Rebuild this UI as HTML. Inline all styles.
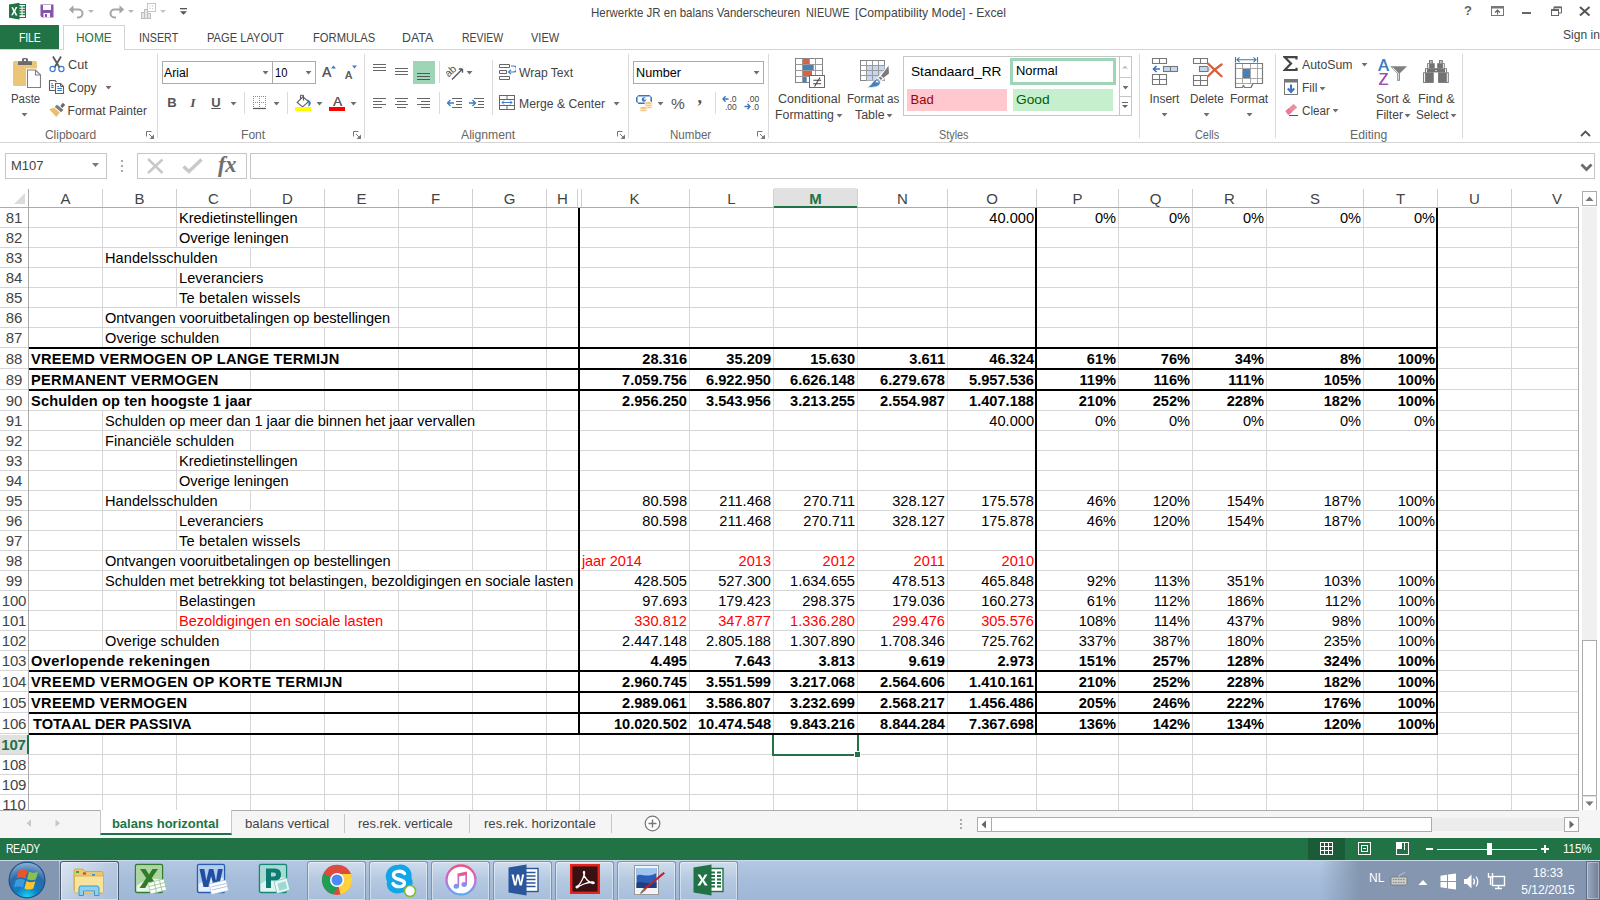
<!DOCTYPE html>
<html><head><meta charset="utf-8"><title>Excel</title>
<style>
*{box-sizing:border-box;margin:0;padding:0}
html,body{width:1600px;height:900px;overflow:hidden;background:#fff}
body{font-family:"Liberation Sans",sans-serif;font-size:12px;color:#444;position:relative}
#app{position:absolute;left:0;top:0;width:1600px;height:900px;overflow:hidden;background:#fff}
#app div,#app i,#app span.a,#app svg{position:absolute}
i{display:block}
/* grid */
.hl{height:1px;background:#d6d6d6}
.vl{width:1px;background:#d6d6d6}
.tk{background:#000;z-index:3}
.ch{top:188px;height:19px;line-height:21.5px;text-align:center;font-size:15px;color:#444}
.ch.sel{background:#e1e1e1;color:#217346;font-weight:bold;border-bottom:2px solid #217346;height:20px}
.hs{top:189px;width:1px;height:18px;background:#d0d0d0}
.rh{left:0;width:28px;text-align:center;font-size:15px;color:#444;letter-spacing:-0.15px}
.rh.sel{background:#e1e1e1;color:#217346;font-weight:bold;border-right:2px solid #217346;width:29px}
.rs{left:0;width:28px;height:1px;background:#d6d6d6}
.ct{font-size:14.6px;color:#000;white-space:nowrap;overflow:visible;z-index:1}
.ct span{display:inline-block;background:#fff;height:100%;vertical-align:top;position:relative}
.ct span b{font-weight:inherit;position:relative;top:1px}
.ct.l{padding-left:0}
.ct.l span{padding-left:2px;padding-right:1px}
.ct.r{text-align:right}
.ct.r span{padding-right:2px}
.ct.b{font-weight:bold}
.ct.red{color:#ff0000}
</style></head><body>
<div id="app">
<!-- ============ TITLE BAR ============ -->
<style>.tt{font-size:12.2px;color:#444;white-space:nowrap;line-height:18px;height:18px}</style>
<div id="tb" style="left:0;top:0;width:1600px;height:25px;background:#fff">
<!-- excel logo -->
<svg style="left:8px;top:2px" width="19" height="19" viewBox="0 0 19 19">
 <rect x="9" y="2.5" width="8.5" height="13" fill="#fff" stroke="#217346" stroke-width="1"></rect>
 <path d="M11 5h2.5M14.5 5H17M11 7.5h2.5M14.5 7.5H17M11 10h2.5M14.5 10H17M11 12.5h2.5M14.5 12.5H17" stroke="#217346" stroke-width="1.4"></path>
 <path d="M1 2.6 11.5 0.8V17.6L1 15.8Z" fill="#217346"></path>
 <path d="M3.3 5.3 5.1 5.2 6.3 7.9 7.6 5 9.4 4.9 7.3 9.2 9.5 13.6 7.6 13.5 6.2 10.6 4.9 13.3 3.2 13.2 5.3 9.2Z" fill="#fff"></path>
</svg>
<!-- save -->
<svg style="left:40px;top:4px" width="14" height="14" viewBox="0 0 14 14">
 <path d="M0.5 0.5H13.5V13.5H2L0.5 12Z" fill="#8653ae"></path>
 <rect x="3" y="1" width="8" height="5" fill="#fff"></rect>
 <rect x="3.5" y="9" width="6.5" height="4.5" fill="#fff"></rect>
 <rect x="5" y="10" width="2" height="3" fill="#8653ae"></rect>
</svg>
<!-- undo -->
<svg style="left:68px;top:4px" width="17" height="15" viewBox="0 0 17 15">
 <path d="M3 5.5H10.5A4 4 0 0 1 10.5 13.5H9" fill="none" stroke="#a6a6a6" stroke-width="2"></path>
 <path d="M0.8 5.5 5.5 1.3V9.7Z" fill="#a6a6a6"></path>
</svg>
<svg style="left:88px;top:10px" width="7" height="4"><path d="M0 0H6L3 3Z" fill="#b5b5b5"></path></svg>
<!-- redo -->
<svg style="left:108px;top:4px" width="17" height="15" viewBox="0 0 17 15">
 <path d="M14 5.5H6.5A4 4 0 0 0 6.5 13.5H8" fill="none" stroke="#a6a6a6" stroke-width="2"></path>
 <path d="M16.2 5.5 11.5 1.3V9.7Z" fill="#a6a6a6"></path>
</svg>
<svg style="left:128px;top:10px" width="7" height="4"><path d="M0 0H6L3 3Z" fill="#b5b5b5"></path></svg>
<!-- disabled chart icon -->
<svg style="left:141px;top:3px" width="16" height="17" viewBox="0 0 16 17">
 <rect x="6.5" y="0.5" width="8" height="8" fill="#fff" stroke="#c4c4c4"></rect>
 <path d="M8.5 3h1M11 3h1M8.5 5.5h1M11 5.5h1" stroke="#c4c4c4" stroke-width="1.2"></path>
 <rect x="0.5" y="9.5" width="3" height="6" fill="#e6e6e6" stroke="#bdbdbd"></rect>
 <rect x="3.5" y="6.5" width="3" height="9" fill="#e6e6e6" stroke="#bdbdbd"></rect>
 <rect x="6.5" y="10.5" width="3" height="5" fill="#e6e6e6" stroke="#bdbdbd"></rect>
</svg>
<svg style="left:160px;top:10px" width="7" height="4"><path d="M0 0H6L3 3Z" fill="#c4c4c4"></path></svg>
<!-- customize QAT -->
<svg style="left:180px;top:8px" width="8" height="8"><rect x="0" y="0" width="7" height="1.3" fill="#555"></rect><path d="M0 3.2H7L3.5 6.8Z" fill="#555"></path></svg>
<div class="tt" style="left: 590.9px; top: 4px; width: auto; text-align: left; padding-left: 0px; padding-right: 0px; transform: scaleX(0.9424); transform-origin: 0px 0px;">Herwerkte JR en balans Vanderscheuren</div>
<div class="tt" style="left: 805.7px; top: 4px; width: auto; text-align: left; padding-left: 0px; padding-right: 0px; transform: scaleX(0.8944); transform-origin: 0px 0px;">NIEUWE</div>
<div class="tt" style="left: 855px; top: 4px; width: auto; text-align: left; padding-left: 0px; padding-right: 0px;">[Compatibility Mode] - Excel</div>
<!-- window controls -->
<div style="left:1462px;top:3px;width:12px;height:16px;line-height:16px;font-size:13px;font-weight:bold;color:#666;text-align:center">?</div>
<svg style="left:1491px;top:6px" width="14" height="11" viewBox="0 0 14 11"><rect x="0.5" y="0.5" width="12" height="9" fill="none" stroke="#777"></rect><rect x="0.5" y="0.5" width="12" height="2" fill="#777"></rect><path d="M6.500 4v4.500M4 6.500l2.500-2.500 2.500 2.500" stroke="#666" fill="none" stroke-width="1.200"></path></svg>
<i style="left:1522px;top:12px;width:9px;height:2px;background:#666"></i>
<svg style="left:1551px;top:6px" width="12" height="12" viewBox="0 0 12 12"><rect x="0.5" y="3.5" width="7" height="6" fill="#fff" stroke="#666"></rect><rect x="0.5" y="3.5" width="7" height="1.5" fill="#666"></rect><path d="M3 3.5V1H10.5V7H8" fill="none" stroke="#666"></path><path d="M3 1.5H10.5" stroke="#666" stroke-width="1.6"></path></svg>
<svg style="left:1579px;top:6px" width="12" height="11" viewBox="0 0 12 11"><path d="M1 1 10.5 9.5M10.5 1 1 9.5" stroke="#555" stroke-width="2"></path></svg>
</div>

<!-- ============ RIBBON ============ -->
<style>
.t{font-size:12px;color:#444;white-space:nowrap;line-height:16px;height:16px}
.tc{text-align:center}
.dd{width:6px;height:3.5px;margin-left:.5px;background:#6f6f6f;clip-path:polygon(0 0,100% 0,50% 100%)}
.gs{top:54px;width:1px;height:84px;background:#dadada}
.ss{width:1px;height:22px;background:#dadada}
.gl{top:127px;font-size:12px;color:#666;line-height:16px;height:16px;white-space:nowrap;text-align:center}
.tab{top:25px;height:24px;line-height:26px;font-size:12.2px;color:#444;text-align:center;white-space:nowrap}
.box{border:1px solid #ababab;background:#fff}
</style>
<!-- tab row -->
<i style="left:0;top:49px;width:1600px;height:1px;background:#d4d4d4"></i>
<i style="left:0;top:25px;width:59px;height:24px;background:#217346"></i>
<div class="tab" style="left: 18.9px; width: auto; color: rgb(255, 255, 255); letter-spacing: -0.172px; text-align: left; padding-left: 0px; padding-right: 0px; transform: scaleX(0.86); transform-origin: 0px 0px;">FILE</div>
<i style="left:63px;top:25px;width:62px;height:25px;border:1px solid #d4d4d4;border-bottom:none;background:#fff"></i>
<div class="tab" style="left: 75.6px; width: auto; color: rgb(33, 115, 70); text-align: left; padding-left: 0px; padding-right: 0px; transform: scaleX(0.9791); transform-origin: 0px 0px;">HOME</div>
<div class="tab" style="left: 138.9px; width: auto; text-align: left; padding-left: 0px; padding-right: 0px; transform: scaleX(0.8812); transform-origin: 0px 0px;">INSERT</div>
<div class="tab" style="left: 206.9px; width: auto; text-align: left; padding-left: 0px; padding-right: 0px; transform: scaleX(0.9131); transform-origin: 0px 0px;">PAGE LAYOUT</div>
<div class="tab" style="left: 312.6px; width: auto; text-align: left; padding-left: 0px; padding-right: 0px; transform: scaleX(0.9185); transform-origin: 0px 0px;">FORMULAS</div>
<div class="tab" style="left: 402.4px; width: auto; text-align: left; padding-left: 0px; padding-right: 0px; transform: scaleX(1.0162); transform-origin: 0px 0px;">DATA</div>
<div class="tab" style="left: 462.4px; width: auto; letter-spacing: -0.034px; text-align: left; padding-left: 0px; padding-right: 0px; transform: scaleX(0.86); transform-origin: 0px 0px;">REVIEW</div>
<div class="tab" style="left: 531.4px; width: auto; text-align: left; padding-left: 0px; padding-right: 0px; transform: scaleX(0.9051); transform-origin: 0px 0px;">VIEW</div>
<div class="t" style="left: 1563.2px; top: 27px; width: auto; text-align: left; padding-right: 0px; padding-left: 0px; transform: scaleX(1.0054); transform-origin: 0px 0px;">Sign in</div>
<!-- ribbon bottom line -->
<i style="left:0;top:142px;width:1600px;height:1px;background:#d4d4d4"></i>
<!-- group separators -->
<i class="gs" style="left:157px"></i><i class="gs" style="left:364px"></i><i class="gs" style="left:628px"></i><i class="gs" style="left:768px"></i><i class="gs" style="left:1139px"></i><i class="gs" style="left:1275px"></i><i class="gs" style="left:1462px"></i>
<!-- group labels -->
<div class="gl" style="left: 44.9px; width: auto; text-align: left; padding-left: 0px; padding-right: 0px;">Clipboard</div>
<div class="gl" style="left: 240.9px; width: auto; text-align: left; padding-left: 0px; padding-right: 0px; transform: scaleX(1.0077); transform-origin: 0px 0px;">Font</div>
<div class="gl" style="left: 461.4px; width: auto; text-align: left; padding-left: 0px; padding-right: 0px; transform: scaleX(1.0155); transform-origin: 0px 0px;">Alignment</div>
<div class="gl" style="left: 670.1px; width: auto; text-align: left; padding-left: 0px; padding-right: 0px; transform: scaleX(0.9652); transform-origin: 0px 0px;">Number</div>
<div class="gl" style="left: 938.6px; width: auto; text-align: left; padding-left: 0px; padding-right: 0px; transform: scaleX(0.9025); transform-origin: 0px 0px;">Styles</div>
<div class="gl" style="left: 1195.1px; width: auto; text-align: left; padding-left: 0px; padding-right: 0px; transform: scaleX(0.9073); transform-origin: 0px 0px;">Cells</div>
<div class="gl" style="left: 1349.9px; width: auto; text-align: left; padding-left: 0px; padding-right: 0px; transform: scaleX(1.019); transform-origin: 0px 0px;">Editing</div>
<!-- dialog launchers -->
<svg class="dl" style="left:146px;top:131px" width="8" height="8"><path d="M0.500 5.500V0.500H5.500" fill="none" stroke="#777"></path><path d="M3 3 6.500 6.500" stroke="#777"></path><path d="M8 3.500V8H3.500Z" fill="#777"></path></svg>
<svg class="dl" style="left:353px;top:131px" width="8" height="8"><path d="M0.500 5.500V0.500H5.500" fill="none" stroke="#777"></path><path d="M3 3 6.500 6.500" stroke="#777"></path><path d="M8 3.500V8H3.500Z" fill="#777"></path></svg>
<svg class="dl" style="left:617px;top:131px" width="8" height="8"><path d="M0.500 5.500V0.500H5.500" fill="none" stroke="#777"></path><path d="M3 3 6.500 6.500" stroke="#777"></path><path d="M8 3.500V8H3.500Z" fill="#777"></path></svg>
<svg class="dl" style="left:757px;top:131px" width="8" height="8"><path d="M0.500 5.500V0.500H5.500" fill="none" stroke="#777"></path><path d="M3 3 6.500 6.500" stroke="#777"></path><path d="M8 3.500V8H3.500Z" fill="#777"></path></svg>
<!-- collapse chevron -->
<svg style="left:1580px;top:130px" width="11" height="7"><path d="M1 6 5.5 1.5 10 6" fill="none" stroke="#555" stroke-width="1.8"></path></svg>

<!-- ===== Clipboard ===== -->
<svg style="left:11px;top:56px" width="32" height="34" viewBox="0 0 32 34">
 <rect x="2" y="5" width="24" height="25" rx="1.500" fill="#ebc678"></rect>
 <path d="M7 9V6.300Q7 5.300 8 5.300H11V3.600Q11 2 12.600 2H15.400Q17 2 17 3.600V5.300H20Q21 5.300 21 6.300V9Z" fill="#6b6b6b"></path>
 <rect x="13" y="3.300" width="2" height="1.700" fill="#fff"></rect>
 <rect x="15" y="12.500" width="15" height="20" fill="#fff"></rect>
 <path d="M16.500 14H24.500L29.500 19V31.500H16.500Z" fill="#fff" stroke="#7f7f7f" stroke-width="1.100"></path>
 <path d="M24.500 14V19H29.500" fill="none" stroke="#7f7f7f" stroke-width="1.100"></path>
</svg>
<div class="t tc" style="left: 10.6px; top: 91px; width: auto; text-align: left; padding-left: 0px; padding-right: 0px; transform: scaleX(0.9515); transform-origin: 0px 0px;">Paste</div>
<i class="dd" style="left:21px;top:113px"></i>
<!-- cut -->
<svg style="left:49px;top:56px" width="16" height="17" viewBox="0 0 16 17">
 <path d="M4 0.500 10.500 11.500M12 0.500 5.500 11.500" stroke="#595959" stroke-width="1.800" fill="none"></path>
 <circle cx="3.6" cy="13" r="2.6" fill="#fff" stroke="#3e7cc4" stroke-width="1.2"></circle>
 <circle cx="12.4" cy="13" r="2.6" fill="#fff" stroke="#3e7cc4" stroke-width="1.2"></circle>
</svg>
<div class="t" style="left: 67.6px; top: 57px; width: auto; text-align: left; padding-left: 0px; padding-right: 0px; transform: scaleX(1.0542); transform-origin: 0px 0px;">Cut</div>
<!-- copy -->
<svg style="left:48px;top:79px" width="17" height="17" viewBox="0 0 17 17">
 <path d="M8.500 3 7 1.500H1.500V11.500H7" fill="none" stroke="#5f5f5f" stroke-width="1.100"></path>
 <path d="M3.200 4.700H5M3.200 6.600H5.700M3.200 8.500H5.700" stroke="#3a76c0" stroke-width="1.100"></path>
 <path d="M7.500 4.500H12.500L15.500 7.500V14.500H7.500Z" fill="#fff" stroke="#5f5f5f" stroke-width="1.100"></path>
 <path d="M12.500 4.500V7.500H15.500" fill="none" stroke="#5f5f5f" stroke-width="1"></path>
 <path d="M9.300 7.500H11M9.300 9.500H13.900M9.300 11.500H13.900" stroke="#3a76c0" stroke-width="1.100"></path>
</svg>
<div class="t" style="left: 67.6px; top: 80px; width: auto; text-align: left; padding-left: 0px; padding-right: 0px; transform: scaleX(1.0244); transform-origin: 0px 0px;">Copy</div>
<i class="dd" style="left:105px;top:86px"></i>
<!-- format painter -->
<svg style="left:49px;top:102px" width="17" height="17" viewBox="0 0 17 17">
 <path d="M13.900 0.800 16.200 2.900 13.400 6 11.300 3.900Z" fill="#6a6a6a"></path>
 <path d="M8 2.900 14.200 8 12.100 10 6 4.700Z" fill="#7a7a7a" stroke="#7a7a7a" stroke-width=".6" stroke-linejoin="round"></path>
 <path d="M5.200 5.400 10.800 10.800 7.300 14.900 0.100 7.200Z" fill="#e9bf73"></path>
</svg>
<div class="t" style="left: 67.6px; top: 103px; width: auto; text-align: left; padding-left: 0px; padding-right: 0px;">Format Painter</div>

<!-- ===== Font ===== -->
<div class="box" style="left:162px;top:61px;width:111px;height:23px"></div>
<div class="box" style="left:272px;top:61px;width:44px;height:23px"></div>
<div class="t" style="left: 164.4px; top: 65px; color: rgb(0, 0, 0); font-size: 12.5px; width: auto; text-align: left; padding-left: 0px; padding-right: 0px; transform: scaleX(0.9754); transform-origin: 0px 0px;">Arial</div>
<div class="t" style="left: 275.1px; top: 65px; color: rgb(0, 0, 0); font-size: 12.5px; width: auto; text-align: left; padding-left: 0px; padding-right: 0px; transform: scaleX(0.8989); transform-origin: 0px 0px;">10</div>
<i class="dd" style="left:262px;top:71px"></i>
<i class="dd" style="left:305px;top:71px"></i>
<div class="t" style="left:322px;top:65px;font-size:13.8px;color:#595959;text-shadow:0.3px 0 0 #595959">A</div>
<svg style="left:331px;top:65px" width="6" height="4"><path d="M0 3.5H5L2.5 0.5Z" fill="#3e7cc4"></path></svg>
<div class="t" style="left:345px;top:67px;font-size:10.5px;color:#595959;text-shadow:0.3px 0 0 #595959">A</div>
<svg style="left:352px;top:65px" width="6" height="4"><path d="M0 0.5H5L2.5 3.5Z" fill="#3e7cc4"></path></svg>
<div class="t" style="left:167px;top:95px;font-size:13px;font-weight:bold;color:#555;width:10px;text-align:center">B</div>
<div class="t" style="left:188px;top:95px;font-size:13.5px;font-style:italic;color:#555;width:10px;text-align:center;font-family:'Liberation Serif',serif;font-weight:bold">I</div>
<div class="t" style="left:211px;top:95px;font-size:13px;font-weight:bold;color:#595959;width:10px;text-align:center;text-decoration:underline">U</div>
<i class="dd" style="left:230px;top:102px"></i>
<i class="ss" style="left:244px;top:92px"></i>
<svg style="left:252px;top:95px" width="15" height="15" viewBox="0 0 15 15"><path d="M1 1.5H14M1 7.5H14M1.5 1V13M7.5 1V13M13.5 1V13" stroke="#8a8a8a" stroke-dasharray="1 1"></path><path d="M1 13.500H14" stroke="#555" stroke-width="1.200"></path></svg>
<i class="dd" style="left:273px;top:102px"></i>
<i class="ss" style="left:287px;top:92px"></i>
<!-- fill -->
<svg style="left:294px;top:93px" width="18" height="19" viewBox="0 0 18 19">
 <path d="M3.200 9.400 8.900 3.800 14.500 8.700 8.600 13.900Z" fill="#fff" stroke="#5a5a5a" stroke-width="1.100"></path>
 <path d="M6.500 6V3Q6.500 2.300 7.200 2.300H8.800Q9.500 2.300 9.500 3V7.500" fill="none" stroke="#5a5a5a" stroke-width="1.100"></path>
 <path d="M13.300 6.200Q17.200 8 16.800 10.500 16.300 12.800 14.300 13.700 15.300 10.200 13.300 6.200Z" fill="#3f7ab8"></path>
 <rect x="1" y="14" width="16" height="4" fill="#ffff00"></rect>
</svg>
<i class="dd" style="left:316px;top:102px"></i>
<!-- font color -->
<div class="t" style="left:330px;top:94px;font-size:13.5px;color:#595959;width:15px;text-align:center;text-shadow:0.3px 0 0 #595959">A</div>
<i style="left:329px;top:107px;width:16px;height:4px;background:#ff0000"></i>
<i class="dd" style="left:350px;top:102px"></i>

<!-- ===== Alignment ===== -->
<svg style="left:373px;top:64px" width="14" height="8"><path d="M0 0.5H13M0 3.5H13M0 6.5H13" stroke="#666"></path></svg>
<svg style="left:395px;top:68px" width="14" height="8"><path d="M0 0.5H13M0 3.5H13M0 6.5H13" stroke="#666"></path></svg>
<i style="left:413px;top:61px;width:22px;height:23px;background:#9fd5b7"></i>
<svg style="left:417px;top:73px" width="14" height="8"><path d="M0 0.5H13M0 3.5H13M0 6.5H13" stroke="#555"></path></svg>
<i class="ss" style="left:439px;top:61px"></i>
<svg style="left:446px;top:62px" width="19" height="19" viewBox="0 0 19 19">
 <text x="-1" y="11.500" font-size="10.500" font-family="Liberation Sans" fill="#555" transform="rotate(-42 6 9)">ab</text>
 <path d="M6 17.500 16.500 7M16.500 7H12.800M16.500 7V10.700" stroke="#555" fill="none" stroke-width="1.300"></path>
</svg>
<i class="dd" style="left:466px;top:71px"></i>
<i class="ss" style="left:492px;top:60px;height:55px"></i>
<!-- wrap text -->
<svg style="left:499px;top:64px" width="17" height="16" viewBox="0 0 17 16">
 <path d="M0.5 0.5H10.5V3.5H0.5ZM0.5 6.5H7.5V9.5H0.5ZM0.5 12.5H10.5V15.5H0.5Z" fill="#fff" stroke="#666"></path>
 <path d="M12 2H14.5A2 2 0 0 1 14.5 8H10.5" fill="none" stroke="#3e7cc4" stroke-width="1.2"></path>
 <path d="M12 5.8 9.5 8 12 10.2" fill="none" stroke="#3e7cc4" stroke-width="1.2"></path>
</svg>
<div class="t" style="left: 518.6px; top: 65px; width: auto; text-align: left; padding-left: 0px; padding-right: 0px; transform: scaleX(1.0079); transform-origin: 0px 0px;">Wrap Text</div>
<!-- row 2 -->
<svg style="left:373px;top:98px" width="14" height="11"><path d="M0 0.5H13M0 3.5H9M0 6.5H13M0 9.5H9" stroke="#666"></path></svg>
<svg style="left:395px;top:98px" width="14" height="11"><path d="M0 0.5H13M2 3.5H11M0 6.5H13M2 9.5H11" stroke="#666"></path></svg>
<svg style="left:417px;top:98px" width="14" height="11"><path d="M0 0.5H13M4 3.5H13M0 6.5H13M4 9.5H13" stroke="#666"></path></svg>
<i class="ss" style="left:439px;top:92px"></i>
<svg style="left:447px;top:98px" width="16" height="11"><path d="M5 0.5H15M9 3.5H15M9 6.5H15M5 9.5H15" stroke="#666"></path><path d="M0.5 5H7M3.5 2 0.5 5 3.5 8" fill="none" stroke="#3e7cc4" stroke-width="1.3"></path></svg>
<svg style="left:469px;top:98px" width="16" height="11"><path d="M5 0.5H15M9 3.5H15M9 6.5H15M5 9.5H15" stroke="#666"></path><path d="M0 5H6.5M3.5 2 6.5 5 3.5 8" fill="none" stroke="#3e7cc4" stroke-width="1.3"></path></svg>

<svg style="left:499px;top:95px" width="17" height="16" viewBox="0 0 17 16">
 <rect x="0.5" y="0.5" width="15" height="14" fill="#fff" stroke="#666"></rect>
 <path d="M0.5 4.5H15.5M0.5 10.5H15.5M8 0.5V4.5M8 10.5V14.5" stroke="#666"></path>
 <path d="M3 7.5H13M5 5.5 3 7.5 5 9.5M11 5.5 13 7.5 11 9.5" fill="none" stroke="#3e7cc4"></path>
</svg>
<div class="t" style="left: 518.6px; top: 96px; width: auto; text-align: left; padding-left: 0px; padding-right: 0px; transform: scaleX(1.0153); transform-origin: 0px 0px;">Merge &amp; Center</div>
<i class="dd" style="left:613px;top:102px"></i>

<!-- ===== Number ===== -->
<div class="box" style="left:633px;top:61px;width:131px;height:23px"></div>
<div class="t" style="left: 635.6px; top: 65px; color: rgb(0, 0, 0); font-size: 12.5px; width: auto; text-align: left; padding-left: 0px; padding-right: 0px; transform: scaleX(1.0119); transform-origin: 0px 0px;">Number</div>
<i class="dd" style="left:753px;top:71px"></i>
<svg style="left:635px;top:94px" width="19" height="18" viewBox="0 0 19 18">
 <path d="M1.800 1.800H16.200V9.200H1.800Z" fill="#fff" stroke="#3a76c0" stroke-width="1.600"></path>
 <path d="M1 1H3.500L1 3.500ZM17 1H14.500L17 3.500ZM1 10H3.500L1 7.500Z" fill="#fff"></path>
 <circle cx="9" cy="5.500" r="2.200" fill="#3a76c0"></circle><circle cx="10" cy="5" r="1" fill="#fff"></circle>
 <g fill="#f1c37a" stroke="#fff" stroke-width=".7"><ellipse cx="13.500" cy="13" rx="3.800" ry="1.500"></ellipse><ellipse cx="13.500" cy="11" rx="3.800" ry="1.500"></ellipse><ellipse cx="13.500" cy="9" rx="3.800" ry="1.500"></ellipse>
 <ellipse cx="8.500" cy="16" rx="3.800" ry="1.500"></ellipse><ellipse cx="8.500" cy="14" rx="3.800" ry="1.500"></ellipse></g>
</svg>
<i class="dd" style="left:657px;top:102px"></i>
<div class="t" style="left:671px;top:95.5px;font-size:15.5px;color:#555">%</div>
<div class="t" style="left:697.500px;top:89px;font-size:18px;color:#555;font-weight:bold;font-family:'Liberation Serif',serif">,</div>
<i class="ss" style="left:715px;top:92px"></i>
<svg style="left:722px;top:94px" width="17" height="17" viewBox="0 0 17 17">
 <path d="M1 5H6.500M3.500 2.300 1 5 3.500 7.700" fill="none" stroke="#3a76c0" stroke-width="1.300"></path>
 <text x="7.500" y="8" font-size="8.500" font-family="Liberation Sans" fill="#444">.0</text>
 <text x="3" y="15.500" font-size="8.500" font-family="Liberation Sans" fill="#444">.00</text>
</svg>
<svg style="left:744px;top:94px" width="17" height="17" viewBox="0 0 17 17">
 <text x="3.300" y="8" font-size="8.500" font-family="Liberation Sans" fill="#444">.00</text>
 <path d="M0.500 12.500H6M3.500 9.800 6 12.500 3.500 15.200" fill="none" stroke="#3a76c0" stroke-width="1.300"></path>
 <text x="8" y="15.500" font-size="8.500" font-family="Liberation Sans" fill="#444">.0</text>
</svg>

<!-- ===== Styles ===== -->
<!-- conditional formatting -->
<svg style="left:795px;top:58px" width="31" height="31" viewBox="0 0 31 31">
 <rect x="0.500" y="0.500" width="27" height="24" fill="#fff" stroke="#858585"></rect>
 <path d="M0.500 6.500H27.800M0.500 12.500H27.800M0.500 18.500H27.800M7.500 0.500V24.500M14.500 0.500V24.500M20.500 0.500V24.500" stroke="#9a9a9a"></path>
 <rect x="8" y="1" width="6" height="5" fill="#dc6141"></rect>
 <rect x="8" y="7" width="10.700" height="5" fill="#4a80ba"></rect>
 <rect x="8" y="13" width="9" height="5" fill="#dc6141"></rect>
 <rect x="8" y="19" width="3.700" height="5.500" fill="#4a80ba"></rect>
 <rect x="14.500" y="17.500" width="15" height="12" fill="#fff" stroke="#6a6a6a"></rect>
 <path d="M18.300 22.300H26.200M18.300 25.700H26.200M25 19.500 19.500 28.500" stroke="#444" stroke-width="1.100"></path>
</svg>
<div class="t tc" style="left: 777.6px; top: 91px; width: auto; text-align: left; padding-left: 0px; padding-right: 0px; transform: scaleX(1.0409); transform-origin: 0px 0px;">Conditional</div>
<div class="t" style="left: 774.9px; top: 107px; width: auto; text-align: left; padding-left: 0px; padding-right: 0px; transform: scaleX(1.0269); transform-origin: 0px 0px;">Formatting</div>
<i class="dd" style="left:836px;top:114px"></i>
<!-- format as table -->
<svg style="left:860px;top:58px" width="31" height="31" viewBox="0 0 31 31">
 <rect x="0.500" y="2.500" width="24" height="20" fill="#fff" stroke="#858585"></rect>
 <rect x="6.500" y="7.500" width="18" height="15" fill="#c4d9f0"></rect>
 <path d="M0.500 7.500H24.500M0.500 12.500H24.500M0.500 17.500H24.500M6.500 2.500V22.500M12.500 2.500V22.500M18.500 2.500V22.500" stroke="#9a9a9a"></path>
 <path d="M29.200 6.500 30 16 21 23.300 17.300 19.500Z" fill="#fff"></path>
 <path d="M28.500 7.700 29 15.400 23.300 20 21 17.700ZM20.300 18.400 22.500 20.700 20.900 21.900 18.600 19.500Z" fill="#7a7a7a"></path>
 <path d="M17 20.500 20.600 24Q20.500 27.500 16.500 28.700 11 30 6.500 29.700 11 27.500 12.500 24.500 14 21.500 17 20.500Z" fill="#4a80ba" stroke="#fff" stroke-width=".8"></path>
 <path d="M16.500 22.500Q18 22.300 19 24.500 17 23.800 15.300 24.500Z" fill="#fff"></path>
</svg>
<div class="t tc" style="left: 846.9px; top: 91px; width: auto; text-align: left; padding-left: 0px; padding-right: 0px; transform: scaleX(0.9701); transform-origin: 0px 0px;">Format as</div>
<div class="t" style="left: 855.1px; top: 107px; width: auto; text-align: left; padding-left: 0px; padding-right: 0px; transform: scaleX(1.0353); transform-origin: 0px 0px;">Table</div>
<i class="dd" style="left:886px;top:114px"></i>
<!-- gallery -->
<div style="left:903px;top:56px;width:229px;height:60px;border:1px solid #c6c6c6;background:#fff"></div>
<i style="left:1119px;top:57px;width:1px;height:58px;background:#c6c6c6"></i>
<i style="left:1119px;top:77px;width:12px;height:1px;background:#c6c6c6"></i>
<i style="left:1119px;top:96px;width:12px;height:1px;background:#c6c6c6"></i>
<svg style="left:1122px;top:65px" width="7" height="4"><path d="M0 3.5H6L3 0.5Z" fill="#c0c0c0"></path></svg>
<i class="dd" style="left:1122px;top:86px"></i>
<svg style="left:1122px;top:102px" width="7" height="8"><path d="M0 0.5H6" stroke="#666"></path><path d="M0 3H6L3 6Z" fill="#666"></path></svg>
<div class="t" style="left: 910.6px; top: 64px; color: rgb(0, 0, 0); font-size: 13px; width: auto; text-align: left; padding-left: 0px; padding-right: 0px; transform: scaleX(1.0523); transform-origin: 0px 0px;">Standaard_RR</div>
<div style="left:1010px;top:58px;width:106px;height:27px;border:3px solid #9fd5b7;background:#fff"></div>
<div class="t" style="left: 1016.4px; top: 63px; color: rgb(0, 0, 0); font-size: 13px; width: auto; text-align: left; padding-left: 0px; padding-right: 0px; transform: scaleX(0.9951); transform-origin: 0px 0px;">Normal</div>
<div style="left:907px;top:89px;width:100px;height:22px;background:#ffc7ce"></div>
<div class="t" style="left: 910.6px; top: 92px; color: rgb(156, 0, 6); font-size: 13px; width: auto; text-align: left; padding-left: 0px; padding-right: 0px;">Bad</div>
<div style="left:1013px;top:89px;width:100px;height:22px;background:#c6efce"></div>
<div class="t" style="left: 1016.4px; top: 92px; color: rgb(0, 97, 0); font-size: 13px; width: auto; text-align: left; padding-left: 0px; padding-right: 0px; transform: scaleX(1.0593); transform-origin: 0px 0px;">Good</div>

<!-- ===== Cells ===== -->
<svg style="left:1151px;top:57px" width="28" height="29" viewBox="0 0 28 29">
 <path d="M1.500 1.500H15.500V6.500H1.500ZM8.500 1.500V6.500" fill="#fff" stroke="#777" stroke-width="1.100"></path>
 <rect x="12.500" y="9.500" width="14" height="5" fill="#c5d9f1" stroke="#777" stroke-width="1.100"></rect><path d="M19.500 9.500V14.500" stroke="#777" stroke-width="1.100"></path>
 <path d="M2.500 12H9M5.500 9 2.500 12 5.500 15" fill="none" stroke="#3a76c0" stroke-width="1.700"></path>
 <path d="M1.500 17.500H15.500V27.500H1.500ZM8.500 17.500V27.500M1.500 22.500H15.500" fill="#fff" stroke="#777" stroke-width="1.100"></path>
</svg>
<div class="t tc" style="left: 1149.4px; top: 91px; width: auto; text-align: left; padding-left: 0px; padding-right: 0px;">Insert</div>
<i class="dd" style="left:1161px;top:113px"></i>
<svg style="left:1192px;top:57px" width="31" height="30" viewBox="0 0 31 30">
 <path d="M1.500 1.500H15.500V6.500H1.500ZM8.500 1.500V6.500" fill="#fff" stroke="#777" stroke-width="1.100"></path>
 <path d="M16 9.500 19.500 12 16 14.500Z" fill="#c5d9f1"></path>
 <rect x="7.500" y="9.500" width="8.500" height="5" fill="#c5d9f1" stroke="#777" stroke-width="1.100"></rect>
 <path d="M1.500 18.500H15.500V28.500H1.500ZM8.500 18.500V28.500M1.500 23.500H15.500" fill="#fff" stroke="#777" stroke-width="1.100"></path>
 <path d="M16 7Q22 12 29.500 19.500M29.500 7.500Q22 12 16 19" stroke="#fff" stroke-width="4" fill="none"></path>
 <path d="M16.300 6.800Q22 12 29.500 19.300M29.500 7.500Q22 12.500 16.300 19" stroke="#d65f3e" stroke-width="2.300" fill="none" stroke-linecap="round"></path>
</svg>
<div class="t tc" style="left: 1189.9px; top: 91px; width: auto; text-align: left; padding-left: 0px; padding-right: 0px; transform: scaleX(0.9715); transform-origin: 0px 0px;">Delete</div>
<i class="dd" style="left:1203px;top:113px"></i>
<svg style="left:1234px;top:56px" width="30" height="33" viewBox="0 0 30 33">
 <path d="M1.500 1V6.500M23.500 1V6.500M3 3.700H22M5.500 1.300 3 3.700 5.500 6.100M19.500 1.300 22 3.700 19.500 6.100" fill="none" stroke="#3a76c0" stroke-width="1.100"></path>
 <path d="M1.500 7.500H28.500V27.500H19L17 31.500H10.500L9.500 29.500 8 31.500H1.500Z" fill="#fff" stroke="#7a7a7a" stroke-width="1.100"></path>
 <path d="M1.500 12.500H28.500M1.500 22.500H28.500M8.500 7.500V27.500M16.500 7.500V27.500M23.500 7.500V27.500M1.500 27.500H19" stroke="#a8a8a8"></path>
 <path d="M1.500 7.500H28.500V27.500H19L17 31.500H10.500L9.500 29.500 8 31.500H1.500Z" fill="none" stroke="#7a7a7a" stroke-width="1.100"></path>
 <rect x="9" y="13" width="7" height="9" fill="#4a80ba"></rect>
</svg>
<div class="t tc" style="left: 1229.9px; top: 91px; width: auto; text-align: left; padding-left: 0px; padding-right: 0px; transform: scaleX(1.0048); transform-origin: 0px 0px;">Format</div>
<i class="dd" style="left:1246px;top:113px"></i>

<!-- ===== Editing ===== -->
<svg style="left:1283px;top:56px" width="15" height="16" viewBox="0 0 15 16"><path d="M13.500 3.500V1.200H1.800L8 7.600 1.800 14H13.500V11.700" fill="none" stroke="#444" stroke-width="2.200"></path></svg>
<div class="t" style="left: 1301.9px; top: 57px; width: auto; text-align: left; padding-left: 0px; padding-right: 0px; transform: scaleX(1.0211); transform-origin: 0px 0px;">AutoSum</div>
<i class="dd" style="left:1361px;top:63px"></i>
<svg style="left:1284px;top:79px" width="15" height="17" viewBox="0 0 15 17"><rect x="0.500" y="0.500" width="13" height="15" fill="#fff" stroke="#777"></rect><rect x="0.500" y="0.500" width="13" height="3" fill="#777"></rect><path d="M7 5.500V13M3.800 9.500 7 13 10.200 9.500" fill="none" stroke="#3a76c0" stroke-width="2.100"></path></svg>
<div class="t" style="left: 1301.9px; top: 80px; width: auto; text-align: left; padding-left: 0px; padding-right: 0px; transform: scaleX(1.0047); transform-origin: 0px 0px;">Fill</div>
<i class="dd" style="left:1319px;top:87px"></i>
<svg style="left:1284px;top:102px" width="16" height="16" viewBox="0 0 16 16"><path d="M1.500 9 9.500 2 13.200 5.300 5.500 12.200Q4.500 13 3.500 12Z" fill="#ea8ea1"></path><path d="M1.500 9 4.500 6.300 8.300 9.700 5.500 12.200Q4.500 13 3.500 12Z" fill="#e77d92"></path><path d="M5 13.500H14" stroke="#555"></path></svg>
<div class="t" style="left: 1301.9px; top: 103px; width: auto; text-align: left; padding-left: 0px; padding-right: 0px; transform: scaleX(0.9725); transform-origin: 0px 0px;">Clear</div>
<i class="dd" style="left:1332px;top:109px"></i>
<!-- sort & filter -->
<div class="t" style="left:1378px;top:58px;font-size:16px;color:#3e7cc4;text-shadow:0.4px 0 0 #3e7cc4">A</div>
<div class="t" style="left:1378.400px;top:72px;font-size:16px;color:#9b4fb5;text-shadow:0.4px 0 0 #9b4fb5">Z</div>
<svg style="left:1390px;top:65px" width="18" height="17" viewBox="0 0 18 17"><path d="M0.200 1.200H17L9.900 8.200V15.700H7.100V8.200Z" fill="#7f7f7f"></path><path d="M2.600 2.500 8.300 8.200V14.800" fill="none" stroke="#fff" stroke-width=".9"></path></svg>
<div class="t tc" style="left: 1375.6px; top: 91px; width: auto; text-align: left; padding-left: 0px; padding-right: 0px; transform: scaleX(1.0342); transform-origin: 0px 0px;">Sort &amp;</div>
<div class="t" style="left: 1375.6px; top: 107px; width: auto; text-align: left; padding-left: 0px; padding-right: 0px; transform: scaleX(1.0123); transform-origin: 0px 0px;">Filter</div>
<i class="dd" style="left:1404px;top:114px"></i>
<!-- find & select -->
<svg style="left:1422px;top:59px" width="28" height="25" viewBox="0 0 28 25">
 <g fill="#727272"><rect x="7" y="1.100" width="3.800" height="3.200"></rect><rect x="17" y="1.100" width="3.800" height="3.200"></rect>
 <rect x="5.200" y="4.200" width="7.500" height="5.100"></rect><rect x="15.200" y="4.200" width="7.500" height="5.100"></rect>
 <rect x="3" y="9.200" width="21.900" height="4.200"></rect>
 <rect x="1.100" y="13.300" width="10.650" height="10.600"></rect><rect x="16.100" y="13.300" width="10.650" height="10.600"></rect></g>
 <g fill="#fff"><rect x="8.400" y="1.900" width="1" height="2.300"></rect><rect x="18.400" y="1.900" width="1" height="2.300"></rect>
 <rect x="6.200" y="5" width=".9" height="4.200"></rect><rect x="20.900" y="5" width=".9" height="4.200"></rect>
 <rect x="4" y="10" width=".9" height="3.200"></rect><rect x="23" y="10" width=".9" height="3.200"></rect>
 <rect x="2.100" y="14.200" width="1" height="8.800"></rect><rect x="24.800" y="14.200" width="1" height="8.800"></rect>
 <rect x="13.200" y="11.200" width="1.600" height=".8"></rect></g>
</svg>
<div class="t tc" style="left: 1417.6px; top: 91px; width: auto; text-align: left; padding-left: 0px; padding-right: 0px; transform: scaleX(1.058); transform-origin: 0px 0px;">Find &amp;</div>
<div class="t" style="left: 1415.6px; top: 107px; width: auto; text-align: left; padding-left: 0px; padding-right: 0px; transform: scaleX(0.9742); transform-origin: 0px 0px;">Select</div>
<i class="dd" style="left:1450px;top:114px"></i>

<!-- ============ FORMULA BAR ============ -->
<div class="box" style="left:5px;top:153px;width:102px;height:26px;border-color:#c6c6c6"></div>
<div class="t" style="left:11px;top:158px;font-size:13px;color:#444">M107</div>
<svg style="left:92px;top:163px" width="8" height="5"><path d="M0 0H7L3.500 4Z" fill="#777"></path></svg>
<i style="left:121px;top:160px;width:2px;height:2px;background:#aaa"></i><i style="left:121px;top:165px;width:2px;height:2px;background:#aaa"></i><i style="left:121px;top:170px;width:2px;height:2px;background:#aaa"></i>
<div class="box" style="left:137px;top:153px;width:110px;height:26px;border-color:#c6c6c6"></div>
<svg style="left:147px;top:158px" width="17" height="16"><path d="M1 1 15.500 15M15.500 1.500 1 15" stroke="#c8c8c8" stroke-width="2.500"></path></svg>
<svg style="left:182px;top:158px" width="21" height="16"><path d="M1.500 8.500 7 13.500 19.500 1.500" fill="none" stroke="#c8c8c8" stroke-width="3.300"></path></svg>
<div style="left:218px;top:151px;width:26px;height:28px;line-height:28px;font-family:'Liberation Serif',serif;font-style:italic;font-weight:bold;font-size:22.5px;color:#6e6e6e;white-space:nowrap;letter-spacing:-0.3px">fx</div>
<div class="box" style="left:250px;top:153px;width:1345px;height:26px;border-color:#c6c6c6"></div>
<svg style="left:1580px;top:163px" width="13" height="10"><path d="M1.500 1.500 6.500 6.500 11.500 1.500" fill="none" stroke="#6a6a6a" stroke-width="2.800"></path></svg>

<!-- ============ GRID ============ -->
<div id="grid" style="left:0;top:0;width:1600px;height:810px;overflow:hidden">
<i style="left:0;top:207px;width:1579px;height:1px;background:#ababab"></i>
<i style="left:28px;top:189px;width:1px;height:621px;background:#ababab"></i>
<svg style="left:13px;top:192px" width="13" height="13"><path d="M12 1V12H1Z" fill="#dcdcdc"></path></svg>
<i class="hl" style="top:227px;left:29px;width:1550px"></i>
<i class="hl" style="top:247px;left:29px;width:1550px"></i>
<i class="hl" style="top:267px;left:29px;width:1550px"></i>
<i class="hl" style="top:287px;left:29px;width:1550px"></i>
<i class="hl" style="top:307px;left:29px;width:1550px"></i>
<i class="hl" style="top:327px;left:29px;width:1550px"></i>
<i class="hl" style="top:347px;left:1438px;width:141px"></i>
<i class="tk" style="top:347px;left:29px;width:1409px;height:2px"></i>
<i class="hl" style="top:368px;left:1438px;width:141px"></i>
<i class="tk" style="top:368px;left:29px;width:1409px;height:2px"></i>
<i class="hl" style="top:389px;left:1438px;width:141px"></i>
<i class="tk" style="top:389px;left:29px;width:1409px;height:2px"></i>
<i class="hl" style="top:410px;left:29px;width:1550px"></i>
<i class="hl" style="top:430px;left:29px;width:1550px"></i>
<i class="hl" style="top:450px;left:29px;width:1550px"></i>
<i class="hl" style="top:470px;left:29px;width:1550px"></i>
<i class="hl" style="top:490px;left:29px;width:1550px"></i>
<i class="hl" style="top:510px;left:29px;width:1550px"></i>
<i class="hl" style="top:530px;left:29px;width:1550px"></i>
<i class="hl" style="top:550px;left:29px;width:1550px"></i>
<i class="hl" style="top:570px;left:29px;width:1550px"></i>
<i class="hl" style="top:590px;left:29px;width:1550px"></i>
<i class="hl" style="top:610px;left:29px;width:1550px"></i>
<i class="hl" style="top:630px;left:29px;width:1550px"></i>
<i class="hl" style="top:650px;left:29px;width:1550px"></i>
<i class="hl" style="top:670px;left:1438px;width:141px"></i>
<i class="tk" style="top:670px;left:29px;width:1409px;height:2px"></i>
<i class="hl" style="top:691px;left:1438px;width:141px"></i>
<i class="tk" style="top:691px;left:29px;width:1409px;height:2px"></i>
<i class="hl" style="top:712px;left:1438px;width:141px"></i>
<i class="tk" style="top:712px;left:29px;width:1409px;height:2px"></i>
<i class="hl" style="top:733px;left:1438px;width:141px"></i>
<i class="tk" style="top:733px;left:29px;width:1409px;height:2px"></i>
<i class="hl" style="top:754px;left:29px;width:1550px"></i>
<i class="hl" style="top:774px;left:29px;width:1550px"></i>
<i class="hl" style="top:794px;left:29px;width:1550px"></i>
<i class="vl" style="left:102px;top:208px;height:602px"></i>
<i class="vl" style="left:176px;top:208px;height:602px"></i>
<i class="vl" style="left:250px;top:208px;height:602px"></i>
<i class="vl" style="left:324px;top:208px;height:602px"></i>
<i class="vl" style="left:398px;top:208px;height:602px"></i>
<i class="vl" style="left:472px;top:208px;height:602px"></i>
<i class="vl" style="left:546px;top:208px;height:602px"></i>
<i class="tk" style="left:578px;top:208px;width:2px;height:527px"></i>
<i class="vl" style="left:579px;top:735px;height:75px"></i>
<i class="vl" style="left:689px;top:208px;height:602px"></i>
<i class="vl" style="left:773px;top:208px;height:602px"></i>
<i class="vl" style="left:857px;top:208px;height:602px"></i>
<i class="vl" style="left:947px;top:208px;height:602px"></i>
<i class="tk" style="left:1035px;top:208px;width:2px;height:527px"></i>
<i class="vl" style="left:1036px;top:735px;height:75px"></i>
<i class="vl" style="left:1118px;top:208px;height:602px"></i>
<i class="vl" style="left:1192px;top:208px;height:602px"></i>
<i class="vl" style="left:1266px;top:208px;height:602px"></i>
<i class="vl" style="left:1363px;top:208px;height:602px"></i>
<i class="tk" style="left:1436px;top:208px;width:2px;height:527px"></i>
<i class="vl" style="left:1437px;top:735px;height:75px"></i>
<i class="vl" style="left:1511px;top:208px;height:602px"></i>
<i class="vl" style="left:1602px;top:208px;height:602px"></i>
<div class="ct l" style="top:208px;left:177px;height:19px;line-height:19px"><span><b style="letter-spacing: -0.031px; margin-right: 0.031px;">Kredietinstellingen</b></span></div>
<div class="ct r" style="top:208px;left:948px;width:88px;height:19px;line-height:19px"><span><b>40.000</b></span></div>
<div class="ct r" style="top:208px;left:1037px;width:81px;height:19px;line-height:19px"><span><b>0%</b></span></div>
<div class="ct r" style="top:208px;left:1119px;width:73px;height:19px;line-height:19px"><span><b>0%</b></span></div>
<div class="ct r" style="top:208px;left:1193px;width:73px;height:19px;line-height:19px"><span><b>0%</b></span></div>
<div class="ct r" style="top:208px;left:1267px;width:96px;height:19px;line-height:19px"><span><b>0%</b></span></div>
<div class="ct r" style="top:208px;left:1364px;width:73px;height:19px;line-height:19px"><span><b>0%</b></span></div>
<div class="ct l" style="top:228px;left:177px;height:19px;line-height:19px"><span><b style="letter-spacing: -0.043px; margin-right: 0.043px;">Overige leningen</b></span></div>
<div class="ct l" style="top:248px;left:103px;height:19px;line-height:19px"><span><b style="letter-spacing: 0.052px; margin-right: -0.052px;">Handelsschulden</b></span></div>
<div class="ct l" style="top:268px;left:177px;height:19px;line-height:19px"><span><b style="letter-spacing: 0.058px; margin-right: -0.058px;">Leveranciers</b></span></div>
<div class="ct l" style="top:288px;left:177px;height:19px;line-height:19px"><span><b style="letter-spacing: 0.162px; margin-right: -0.162px;">Te betalen wissels</b></span></div>
<div class="ct l" style="top:308px;left:103px;height:19px;line-height:19px"><span><b style="letter-spacing: -0.087px; margin-right: 0.087px;">Ontvangen vooruitbetalingen op bestellingen</b></span></div>
<div class="ct l" style="top:328px;left:103px;height:19px;line-height:19px"><span><b style="letter-spacing: 0.041px; margin-right: -0.041px;">Overige schulden</b></span></div>
<div class="ct l b" style="top:349px;left:29px;height:19px;line-height:19px"><span><b style="letter-spacing: 0.273px; margin-right: -0.273px;">VREEMD VERMOGEN OP LANGE TERMIJN</b></span></div>
<div class="ct r b" style="top:349px;left:580px;width:109px;height:19px;line-height:19px"><span><b>28.316</b></span></div>
<div class="ct r b" style="top:349px;left:690px;width:83px;height:19px;line-height:19px"><span><b>35.209</b></span></div>
<div class="ct r b" style="top:349px;left:774px;width:83px;height:19px;line-height:19px"><span><b>15.630</b></span></div>
<div class="ct r b" style="top:349px;left:858px;width:89px;height:19px;line-height:19px"><span><b>3.611</b></span></div>
<div class="ct r b" style="top:349px;left:948px;width:88px;height:19px;line-height:19px"><span><b>46.324</b></span></div>
<div class="ct r b" style="top:349px;left:1037px;width:81px;height:19px;line-height:19px"><span><b>61%</b></span></div>
<div class="ct r b" style="top:349px;left:1119px;width:73px;height:19px;line-height:19px"><span><b>76%</b></span></div>
<div class="ct r b" style="top:349px;left:1193px;width:73px;height:19px;line-height:19px"><span><b>34%</b></span></div>
<div class="ct r b" style="top:349px;left:1267px;width:96px;height:19px;line-height:19px"><span><b>8%</b></span></div>
<div class="ct r b" style="top:349px;left:1364px;width:73px;height:19px;line-height:19px"><span><b>100%</b></span></div>
<div class="ct l b" style="top:370px;left:29px;height:19px;line-height:19px"><span><b style="letter-spacing: 0.328px; margin-right: -0.328px;">PERMANENT VERMOGEN</b></span></div>
<div class="ct r b" style="top:370px;left:580px;width:109px;height:19px;line-height:19px"><span><b>7.059.756</b></span></div>
<div class="ct r b" style="top:370px;left:690px;width:83px;height:19px;line-height:19px"><span><b>6.922.950</b></span></div>
<div class="ct r b" style="top:370px;left:774px;width:83px;height:19px;line-height:19px"><span><b>6.626.148</b></span></div>
<div class="ct r b" style="top:370px;left:858px;width:89px;height:19px;line-height:19px"><span><b>6.279.678</b></span></div>
<div class="ct r b" style="top:370px;left:948px;width:88px;height:19px;line-height:19px"><span><b>5.957.536</b></span></div>
<div class="ct r b" style="top:370px;left:1037px;width:81px;height:19px;line-height:19px"><span><b>119%</b></span></div>
<div class="ct r b" style="top:370px;left:1119px;width:73px;height:19px;line-height:19px"><span><b>116%</b></span></div>
<div class="ct r b" style="top:370px;left:1193px;width:73px;height:19px;line-height:19px"><span><b>111%</b></span></div>
<div class="ct r b" style="top:370px;left:1267px;width:96px;height:19px;line-height:19px"><span><b>105%</b></span></div>
<div class="ct r b" style="top:370px;left:1364px;width:73px;height:19px;line-height:19px"><span><b>100%</b></span></div>
<div class="ct l b" style="top:391px;left:29px;height:19px;line-height:19px"><span><b style="letter-spacing: 0.144px; margin-right: -0.144px;">Schulden op ten hoogste 1 jaar</b></span></div>
<div class="ct r b" style="top:391px;left:580px;width:109px;height:19px;line-height:19px"><span><b>2.956.250</b></span></div>
<div class="ct r b" style="top:391px;left:690px;width:83px;height:19px;line-height:19px"><span><b>3.543.956</b></span></div>
<div class="ct r b" style="top:391px;left:774px;width:83px;height:19px;line-height:19px"><span><b>3.213.255</b></span></div>
<div class="ct r b" style="top:391px;left:858px;width:89px;height:19px;line-height:19px"><span><b>2.554.987</b></span></div>
<div class="ct r b" style="top:391px;left:948px;width:88px;height:19px;line-height:19px"><span><b>1.407.188</b></span></div>
<div class="ct r b" style="top:391px;left:1037px;width:81px;height:19px;line-height:19px"><span><b>210%</b></span></div>
<div class="ct r b" style="top:391px;left:1119px;width:73px;height:19px;line-height:19px"><span><b>252%</b></span></div>
<div class="ct r b" style="top:391px;left:1193px;width:73px;height:19px;line-height:19px"><span><b>228%</b></span></div>
<div class="ct r b" style="top:391px;left:1267px;width:96px;height:19px;line-height:19px"><span><b>182%</b></span></div>
<div class="ct r b" style="top:391px;left:1364px;width:73px;height:19px;line-height:19px"><span><b>100%</b></span></div>
<div class="ct l" style="top:411px;left:103px;height:19px;line-height:19px"><span><b style="letter-spacing: -0.068px; margin-right: 0.068px;">Schulden op meer dan 1 jaar die binnen het jaar vervallen</b></span></div>
<div class="ct r" style="top:411px;left:948px;width:88px;height:19px;line-height:19px"><span><b>40.000</b></span></div>
<div class="ct r" style="top:411px;left:1037px;width:81px;height:19px;line-height:19px"><span><b>0%</b></span></div>
<div class="ct r" style="top:411px;left:1119px;width:73px;height:19px;line-height:19px"><span><b>0%</b></span></div>
<div class="ct r" style="top:411px;left:1193px;width:73px;height:19px;line-height:19px"><span><b>0%</b></span></div>
<div class="ct r" style="top:411px;left:1267px;width:96px;height:19px;line-height:19px"><span><b>0%</b></span></div>
<div class="ct r" style="top:411px;left:1364px;width:73px;height:19px;line-height:19px"><span><b>0%</b></span></div>
<div class="ct l" style="top:431px;left:103px;height:19px;line-height:19px"><span><b style="letter-spacing: 0.011px; margin-right: -0.011px;">Financiële schulden</b></span></div>
<div class="ct l" style="top:451px;left:177px;height:19px;line-height:19px"><span><b style="letter-spacing: -0.031px; margin-right: 0.031px;">Kredietinstellingen</b></span></div>
<div class="ct l" style="top:471px;left:177px;height:19px;line-height:19px"><span><b style="letter-spacing: -0.043px; margin-right: 0.043px;">Overige leningen</b></span></div>
<div class="ct l" style="top:491px;left:103px;height:19px;line-height:19px"><span><b style="letter-spacing: 0.052px; margin-right: -0.052px;">Handelsschulden</b></span></div>
<div class="ct r" style="top:491px;left:580px;width:109px;height:19px;line-height:19px"><span><b>80.598</b></span></div>
<div class="ct r" style="top:491px;left:690px;width:83px;height:19px;line-height:19px"><span><b>211.468</b></span></div>
<div class="ct r" style="top:491px;left:774px;width:83px;height:19px;line-height:19px"><span><b>270.711</b></span></div>
<div class="ct r" style="top:491px;left:858px;width:89px;height:19px;line-height:19px"><span><b>328.127</b></span></div>
<div class="ct r" style="top:491px;left:948px;width:88px;height:19px;line-height:19px"><span><b>175.578</b></span></div>
<div class="ct r" style="top:491px;left:1037px;width:81px;height:19px;line-height:19px"><span><b>46%</b></span></div>
<div class="ct r" style="top:491px;left:1119px;width:73px;height:19px;line-height:19px"><span><b>120%</b></span></div>
<div class="ct r" style="top:491px;left:1193px;width:73px;height:19px;line-height:19px"><span><b>154%</b></span></div>
<div class="ct r" style="top:491px;left:1267px;width:96px;height:19px;line-height:19px"><span><b>187%</b></span></div>
<div class="ct r" style="top:491px;left:1364px;width:73px;height:19px;line-height:19px"><span><b>100%</b></span></div>
<div class="ct l" style="top:511px;left:177px;height:19px;line-height:19px"><span><b style="letter-spacing: 0.058px; margin-right: -0.058px;">Leveranciers</b></span></div>
<div class="ct r" style="top:511px;left:580px;width:109px;height:19px;line-height:19px"><span><b>80.598</b></span></div>
<div class="ct r" style="top:511px;left:690px;width:83px;height:19px;line-height:19px"><span><b>211.468</b></span></div>
<div class="ct r" style="top:511px;left:774px;width:83px;height:19px;line-height:19px"><span><b>270.711</b></span></div>
<div class="ct r" style="top:511px;left:858px;width:89px;height:19px;line-height:19px"><span><b>328.127</b></span></div>
<div class="ct r" style="top:511px;left:948px;width:88px;height:19px;line-height:19px"><span><b>175.878</b></span></div>
<div class="ct r" style="top:511px;left:1037px;width:81px;height:19px;line-height:19px"><span><b>46%</b></span></div>
<div class="ct r" style="top:511px;left:1119px;width:73px;height:19px;line-height:19px"><span><b>120%</b></span></div>
<div class="ct r" style="top:511px;left:1193px;width:73px;height:19px;line-height:19px"><span><b>154%</b></span></div>
<div class="ct r" style="top:511px;left:1267px;width:96px;height:19px;line-height:19px"><span><b>187%</b></span></div>
<div class="ct r" style="top:511px;left:1364px;width:73px;height:19px;line-height:19px"><span><b>100%</b></span></div>
<div class="ct l" style="top:531px;left:177px;height:19px;line-height:19px"><span><b style="letter-spacing: 0.162px; margin-right: -0.162px;">Te betalen wissels</b></span></div>
<div class="ct l" style="top:551px;left:103px;height:19px;line-height:19px"><span><b style="letter-spacing: -0.075px; margin-right: 0.075px;">Ontvangen vooruitbetalingen op bestellingen</b></span></div>
<div class="ct l red" style="top:551px;left:580px;height:19px;line-height:19px"><span><b style="letter-spacing: -0.12px; margin-right: 0.12px;">jaar 2014</b></span></div>
<div class="ct r red" style="top:551px;left:690px;width:83px;height:19px;line-height:19px"><span><b>2013</b></span></div>
<div class="ct r red" style="top:551px;left:774px;width:83px;height:19px;line-height:19px"><span><b>2012</b></span></div>
<div class="ct r red" style="top:551px;left:858px;width:89px;height:19px;line-height:19px"><span><b>2011</b></span></div>
<div class="ct r red" style="top:551px;left:948px;width:88px;height:19px;line-height:19px"><span><b>2010</b></span></div>
<div class="ct l" style="top:571px;left:103px;height:19px;line-height:19px"><span><b style="letter-spacing: -0.032px; margin-right: 0.032px;">Schulden met betrekking tot belastingen, bezoldigingen en sociale lasten</b></span></div>
<div class="ct r" style="top:571px;left:580px;width:109px;height:19px;line-height:19px"><span><b>428.505</b></span></div>
<div class="ct r" style="top:571px;left:690px;width:83px;height:19px;line-height:19px"><span><b>527.300</b></span></div>
<div class="ct r" style="top:571px;left:774px;width:83px;height:19px;line-height:19px"><span><b>1.634.655</b></span></div>
<div class="ct r" style="top:571px;left:858px;width:89px;height:19px;line-height:19px"><span><b>478.513</b></span></div>
<div class="ct r" style="top:571px;left:948px;width:88px;height:19px;line-height:19px"><span><b>465.848</b></span></div>
<div class="ct r" style="top:571px;left:1037px;width:81px;height:19px;line-height:19px"><span><b>92%</b></span></div>
<div class="ct r" style="top:571px;left:1119px;width:73px;height:19px;line-height:19px"><span><b>113%</b></span></div>
<div class="ct r" style="top:571px;left:1193px;width:73px;height:19px;line-height:19px"><span><b>351%</b></span></div>
<div class="ct r" style="top:571px;left:1267px;width:96px;height:19px;line-height:19px"><span><b>103%</b></span></div>
<div class="ct r" style="top:571px;left:1364px;width:73px;height:19px;line-height:19px"><span><b>100%</b></span></div>
<div class="ct l" style="top:591px;left:177px;height:19px;line-height:19px"><span><b style="letter-spacing: 0.002px; margin-right: -0.002px;">Belastingen</b></span></div>
<div class="ct r" style="top:591px;left:580px;width:109px;height:19px;line-height:19px"><span><b>97.693</b></span></div>
<div class="ct r" style="top:591px;left:690px;width:83px;height:19px;line-height:19px"><span><b>179.423</b></span></div>
<div class="ct r" style="top:591px;left:774px;width:83px;height:19px;line-height:19px"><span><b>298.375</b></span></div>
<div class="ct r" style="top:591px;left:858px;width:89px;height:19px;line-height:19px"><span><b>179.036</b></span></div>
<div class="ct r" style="top:591px;left:948px;width:88px;height:19px;line-height:19px"><span><b>160.273</b></span></div>
<div class="ct r" style="top:591px;left:1037px;width:81px;height:19px;line-height:19px"><span><b>61%</b></span></div>
<div class="ct r" style="top:591px;left:1119px;width:73px;height:19px;line-height:19px"><span><b>112%</b></span></div>
<div class="ct r" style="top:591px;left:1193px;width:73px;height:19px;line-height:19px"><span><b>186%</b></span></div>
<div class="ct r" style="top:591px;left:1267px;width:96px;height:19px;line-height:19px"><span><b>112%</b></span></div>
<div class="ct r" style="top:591px;left:1364px;width:73px;height:19px;line-height:19px"><span><b>100%</b></span></div>
<div class="ct l red" style="top:611px;left:177px;height:19px;line-height:19px"><span><b style="letter-spacing: -0.009px; margin-right: 0.009px;">Bezoldigingen en sociale lasten</b></span></div>
<div class="ct r red" style="top:611px;left:580px;width:109px;height:19px;line-height:19px"><span><b>330.812</b></span></div>
<div class="ct r red" style="top:611px;left:690px;width:83px;height:19px;line-height:19px"><span><b>347.877</b></span></div>
<div class="ct r red" style="top:611px;left:774px;width:83px;height:19px;line-height:19px"><span><b>1.336.280</b></span></div>
<div class="ct r red" style="top:611px;left:858px;width:89px;height:19px;line-height:19px"><span><b>299.476</b></span></div>
<div class="ct r red" style="top:611px;left:948px;width:88px;height:19px;line-height:19px"><span><b>305.576</b></span></div>
<div class="ct r" style="top:611px;left:1037px;width:81px;height:19px;line-height:19px"><span><b>108%</b></span></div>
<div class="ct r" style="top:611px;left:1119px;width:73px;height:19px;line-height:19px"><span><b>114%</b></span></div>
<div class="ct r" style="top:611px;left:1193px;width:73px;height:19px;line-height:19px"><span><b>437%</b></span></div>
<div class="ct r" style="top:611px;left:1267px;width:96px;height:19px;line-height:19px"><span><b>98%</b></span></div>
<div class="ct r" style="top:611px;left:1364px;width:73px;height:19px;line-height:19px"><span><b>100%</b></span></div>
<div class="ct l" style="top:631px;left:103px;height:19px;line-height:19px"><span><b style="letter-spacing: 0.048px; margin-right: -0.048px;">Overige schulden</b></span></div>
<div class="ct r" style="top:631px;left:580px;width:109px;height:19px;line-height:19px"><span><b>2.447.148</b></span></div>
<div class="ct r" style="top:631px;left:690px;width:83px;height:19px;line-height:19px"><span><b>2.805.188</b></span></div>
<div class="ct r" style="top:631px;left:774px;width:83px;height:19px;line-height:19px"><span><b>1.307.890</b></span></div>
<div class="ct r" style="top:631px;left:858px;width:89px;height:19px;line-height:19px"><span><b>1.708.346</b></span></div>
<div class="ct r" style="top:631px;left:948px;width:88px;height:19px;line-height:19px"><span><b>725.762</b></span></div>
<div class="ct r" style="top:631px;left:1037px;width:81px;height:19px;line-height:19px"><span><b>337%</b></span></div>
<div class="ct r" style="top:631px;left:1119px;width:73px;height:19px;line-height:19px"><span><b>387%</b></span></div>
<div class="ct r" style="top:631px;left:1193px;width:73px;height:19px;line-height:19px"><span><b>180%</b></span></div>
<div class="ct r" style="top:631px;left:1267px;width:96px;height:19px;line-height:19px"><span><b>235%</b></span></div>
<div class="ct r" style="top:631px;left:1364px;width:73px;height:19px;line-height:19px"><span><b>100%</b></span></div>
<div class="ct l b" style="top:651px;left:29px;height:19px;line-height:19px"><span><b style="letter-spacing: 0.37px; margin-right: -0.37px;">Overlopende rekeningen</b></span></div>
<div class="ct r b" style="top:651px;left:580px;width:109px;height:19px;line-height:19px"><span><b>4.495</b></span></div>
<div class="ct r b" style="top:651px;left:690px;width:83px;height:19px;line-height:19px"><span><b>7.643</b></span></div>
<div class="ct r b" style="top:651px;left:774px;width:83px;height:19px;line-height:19px"><span><b>3.813</b></span></div>
<div class="ct r b" style="top:651px;left:858px;width:89px;height:19px;line-height:19px"><span><b>9.619</b></span></div>
<div class="ct r b" style="top:651px;left:948px;width:88px;height:19px;line-height:19px"><span><b>2.973</b></span></div>
<div class="ct r b" style="top:651px;left:1037px;width:81px;height:19px;line-height:19px"><span><b>151%</b></span></div>
<div class="ct r b" style="top:651px;left:1119px;width:73px;height:19px;line-height:19px"><span><b>257%</b></span></div>
<div class="ct r b" style="top:651px;left:1193px;width:73px;height:19px;line-height:19px"><span><b>128%</b></span></div>
<div class="ct r b" style="top:651px;left:1267px;width:96px;height:19px;line-height:19px"><span><b>324%</b></span></div>
<div class="ct r b" style="top:651px;left:1364px;width:73px;height:19px;line-height:19px"><span><b>100%</b></span></div>
<div class="ct l b" style="top:672px;left:29px;height:19px;line-height:19px"><span><b style="letter-spacing: 0.373px; margin-right: -0.373px;">VREEMD VERMOGEN OP KORTE TERMIJN</b></span></div>
<div class="ct r b" style="top:672px;left:580px;width:109px;height:19px;line-height:19px"><span><b>2.960.745</b></span></div>
<div class="ct r b" style="top:672px;left:690px;width:83px;height:19px;line-height:19px"><span><b>3.551.599</b></span></div>
<div class="ct r b" style="top:672px;left:774px;width:83px;height:19px;line-height:19px"><span><b>3.217.068</b></span></div>
<div class="ct r b" style="top:672px;left:858px;width:89px;height:19px;line-height:19px"><span><b>2.564.606</b></span></div>
<div class="ct r b" style="top:672px;left:948px;width:88px;height:19px;line-height:19px"><span><b>1.410.161</b></span></div>
<div class="ct r b" style="top:672px;left:1037px;width:81px;height:19px;line-height:19px"><span><b>210%</b></span></div>
<div class="ct r b" style="top:672px;left:1119px;width:73px;height:19px;line-height:19px"><span><b>252%</b></span></div>
<div class="ct r b" style="top:672px;left:1193px;width:73px;height:19px;line-height:19px"><span><b>228%</b></span></div>
<div class="ct r b" style="top:672px;left:1267px;width:96px;height:19px;line-height:19px"><span><b>182%</b></span></div>
<div class="ct r b" style="top:672px;left:1364px;width:73px;height:19px;line-height:19px"><span><b>100%</b></span></div>
<div class="ct l b" style="top:693px;left:29px;height:19px;line-height:19px"><span><b style="letter-spacing: 0.319px; margin-right: -0.319px;">VREEMD VERMOGEN</b></span></div>
<div class="ct r b" style="top:693px;left:580px;width:109px;height:19px;line-height:19px"><span><b>2.989.061</b></span></div>
<div class="ct r b" style="top:693px;left:690px;width:83px;height:19px;line-height:19px"><span><b>3.586.807</b></span></div>
<div class="ct r b" style="top:693px;left:774px;width:83px;height:19px;line-height:19px"><span><b>3.232.699</b></span></div>
<div class="ct r b" style="top:693px;left:858px;width:89px;height:19px;line-height:19px"><span><b>2.568.217</b></span></div>
<div class="ct r b" style="top:693px;left:948px;width:88px;height:19px;line-height:19px"><span><b>1.456.486</b></span></div>
<div class="ct r b" style="top:693px;left:1037px;width:81px;height:19px;line-height:19px"><span><b>205%</b></span></div>
<div class="ct r b" style="top:693px;left:1119px;width:73px;height:19px;line-height:19px"><span><b>246%</b></span></div>
<div class="ct r b" style="top:693px;left:1193px;width:73px;height:19px;line-height:19px"><span><b>222%</b></span></div>
<div class="ct r b" style="top:693px;left:1267px;width:96px;height:19px;line-height:19px"><span><b>176%</b></span></div>
<div class="ct r b" style="top:693px;left:1364px;width:73px;height:19px;line-height:19px"><span><b>100%</b></span></div>
<div class="ct l b" style="top:714px;left:31px;height:19px;line-height:19px"><span><b style="letter-spacing: 0.012px; margin-right: -0.012px;">TOTAAL DER PASSIVA</b></span></div>
<div class="ct r b" style="top:714px;left:580px;width:109px;height:19px;line-height:19px"><span><b>10.020.502</b></span></div>
<div class="ct r b" style="top:714px;left:690px;width:83px;height:19px;line-height:19px"><span><b>10.474.548</b></span></div>
<div class="ct r b" style="top:714px;left:774px;width:83px;height:19px;line-height:19px"><span><b>9.843.216</b></span></div>
<div class="ct r b" style="top:714px;left:858px;width:89px;height:19px;line-height:19px"><span><b>8.844.284</b></span></div>
<div class="ct r b" style="top:714px;left:948px;width:88px;height:19px;line-height:19px"><span><b>7.367.698</b></span></div>
<div class="ct r b" style="top:714px;left:1037px;width:81px;height:19px;line-height:19px"><span><b>136%</b></span></div>
<div class="ct r b" style="top:714px;left:1119px;width:73px;height:19px;line-height:19px"><span><b>142%</b></span></div>
<div class="ct r b" style="top:714px;left:1193px;width:73px;height:19px;line-height:19px"><span><b>134%</b></span></div>
<div class="ct r b" style="top:714px;left:1267px;width:96px;height:19px;line-height:19px"><span><b>120%</b></span></div>
<div class="ct r b" style="top:714px;left:1364px;width:73px;height:19px;line-height:19px"><span><b>100%</b></span></div>
<div class="ch" style="left:29px;width:73px">A</div>
<i class="hs" style="left:102px"></i>
<div class="ch" style="left:103px;width:73px">B</div>
<i class="hs" style="left:176px"></i>
<div class="ch" style="left:177px;width:73px">C</div>
<i class="hs" style="left:250px"></i>
<div class="ch" style="left:251px;width:73px">D</div>
<i class="hs" style="left:324px"></i>
<div class="ch" style="left:325px;width:73px">E</div>
<i class="hs" style="left:398px"></i>
<div class="ch" style="left:399px;width:73px">F</div>
<i class="hs" style="left:472px"></i>
<div class="ch" style="left:473px;width:73px">G</div>
<i class="hs" style="left:546px"></i>
<div class="ch" style="left:547px;width:31px">H</div>
<i class="hs" style="left:577px"></i><i class="hs" style="left:581px"></i>
<div class="ch" style="left:580px;width:109px">K</div>
<i class="hs" style="left:689px"></i>
<div class="ch" style="left:690px;width:83px">L</div>
<i class="hs" style="left:773px"></i>
<div class="ch sel" style="left:774px;width:83px">M</div>
<i class="hs" style="left:857px"></i>
<div class="ch" style="left:858px;width:89px">N</div>
<i class="hs" style="left:947px"></i>
<div class="ch" style="left:948px;width:88px">O</div>
<i class="hs" style="left:1036px"></i>
<div class="ch" style="left:1037px;width:81px">P</div>
<i class="hs" style="left:1118px"></i>
<div class="ch" style="left:1119px;width:73px">Q</div>
<i class="hs" style="left:1192px"></i>
<div class="ch" style="left:1193px;width:73px">R</div>
<i class="hs" style="left:1266px"></i>
<div class="ch" style="left:1267px;width:96px">S</div>
<i class="hs" style="left:1363px"></i>
<div class="ch" style="left:1364px;width:73px">T</div>
<i class="hs" style="left:1437px"></i>
<div class="ch" style="left:1438px;width:73px">U</div>
<i class="hs" style="left:1511px"></i>
<div class="ch" style="left:1512px;width:90px">V</div>
<div class="rh" style="top:208px;height:19px;line-height:20px">81</div>
<i class="rs" style="top:227px"></i>
<div class="rh" style="top:228px;height:19px;line-height:20px">82</div>
<i class="rs" style="top:247px"></i>
<div class="rh" style="top:248px;height:19px;line-height:20px">83</div>
<i class="rs" style="top:267px"></i>
<div class="rh" style="top:268px;height:19px;line-height:20px">84</div>
<i class="rs" style="top:287px"></i>
<div class="rh" style="top:288px;height:19px;line-height:20px">85</div>
<i class="rs" style="top:307px"></i>
<div class="rh" style="top:308px;height:19px;line-height:20px">86</div>
<i class="rs" style="top:327px"></i>
<div class="rh" style="top:328px;height:19px;line-height:20px">87</div>
<i class="rs" style="top:347px"></i>
<div class="rh" style="top:349px;height:19px;line-height:20px">88</div>
<i class="rs" style="top:368px"></i>
<div class="rh" style="top:370px;height:19px;line-height:20px">89</div>
<i class="rs" style="top:389px"></i>
<div class="rh" style="top:391px;height:19px;line-height:20px">90</div>
<i class="rs" style="top:410px"></i>
<div class="rh" style="top:411px;height:19px;line-height:20px">91</div>
<i class="rs" style="top:430px"></i>
<div class="rh" style="top:431px;height:19px;line-height:20px">92</div>
<i class="rs" style="top:450px"></i>
<div class="rh" style="top:451px;height:19px;line-height:20px">93</div>
<i class="rs" style="top:470px"></i>
<div class="rh" style="top:471px;height:19px;line-height:20px">94</div>
<i class="rs" style="top:490px"></i>
<div class="rh" style="top:491px;height:19px;line-height:20px">95</div>
<i class="rs" style="top:510px"></i>
<div class="rh" style="top:511px;height:19px;line-height:20px">96</div>
<i class="rs" style="top:530px"></i>
<div class="rh" style="top:531px;height:19px;line-height:20px">97</div>
<i class="rs" style="top:550px"></i>
<div class="rh" style="top:551px;height:19px;line-height:20px">98</div>
<i class="rs" style="top:570px"></i>
<div class="rh" style="top:571px;height:19px;line-height:20px">99</div>
<i class="rs" style="top:590px"></i>
<div class="rh" style="top:591px;height:19px;line-height:20px">100</div>
<i class="rs" style="top:610px"></i>
<div class="rh" style="top:611px;height:19px;line-height:20px">101</div>
<i class="rs" style="top:630px"></i>
<div class="rh" style="top:631px;height:19px;line-height:20px">102</div>
<i class="rs" style="top:650px"></i>
<div class="rh" style="top:651px;height:19px;line-height:20px">103</div>
<i class="rs" style="top:670px"></i>
<div class="rh" style="top:672px;height:19px;line-height:20px">104</div>
<i class="rs" style="top:691px"></i>
<div class="rh" style="top:693px;height:19px;line-height:20px">105</div>
<i class="rs" style="top:712px"></i>
<div class="rh" style="top:714px;height:19px;line-height:20px">106</div>
<i class="rs" style="top:733px"></i>
<div class="rh sel" style="top:735px;height:19px;line-height:20px">107</div>
<i class="rs" style="top:754px"></i>
<div class="rh" style="top:755px;height:19px;line-height:20px">108</div>
<i class="rs" style="top:774px"></i>
<div class="rh" style="top:775px;height:19px;line-height:20px">109</div>
<i class="rs" style="top:794px"></i>
<div class="rh" style="top:795px;height:19px;line-height:20px">110</div>
<!-- selection -->
<div style="left:772px;top:733px;width:87px;height:23px;border:2px solid #217346"></div>
<div style="left:854px;top:751px;width:7px;height:7px;background:#217346;border:1px solid #fff"></div>
</div>
<!-- ============ SCROLLBARS / TABS ============ -->
<!-- vertical scrollbar -->
<div style="left:1579px;top:188px;width:21px;height:623px;background:#fff"></div>
<i style="left:1578px;top:207px;width:1px;height:604px;background:#ababab"></i>
<div style="left:1582px;top:207px;width:15px;height:590px;background:#f0f0f0"></div>
<div style="left:1582px;top:191px;width:15px;height:15px;border:1px solid #ababab;background:#fff"></div>
<svg style="left:1585px;top:196px" width="9" height="6"><path d="M0.5 5H8.500L4.500 0.500Z" fill="#777"></path></svg>
<div style="left:1582px;top:640px;width:15px;height:156px;background:#fff;border:1px solid #ababab"></div>
<div style="left:1582px;top:796px;width:15px;height:15px;border:1px solid #ababab;border-top-color:#e0e0e0;background:#fff"></div>
<svg style="left:1585px;top:801px" width="9" height="6"><path d="M0.500 0.500H8.500L4.500 5Z" fill="#777"></path></svg>
<!-- sheet tab bar -->
<div style="left:0;top:810px;width:1600px;height:28px;background:#f5f5f5"></div>
<i style="left:0;top:810px;width:1579px;height:1px;background:#ababab"></i>
<svg style="left:26px;top:819px" width="6" height="9"><path d="M5 0.500V8L0.500 4.250Z" fill="#c8c8c8"></path></svg>
<svg style="left:55px;top:819px" width="6" height="9"><path d="M0.500 0.500V8L5 4.250Z" fill="#c8c8c8"></path></svg>
<div style="left:100px;top:810px;width:132px;height:25px;background:#fff;border-left:1px solid #c6c6c6;border-right:1px solid #c6c6c6;border-bottom:2px solid #217346"></div>
<div class="t tc" style="left: 111.9px; top: 816px; width: auto; font-size: 13px; font-weight: bold; color: rgb(33, 115, 70); text-align: left; padding-left: 0px; padding-right: 0px;">balans horizontal</div>
<div class="t tc" style="left: 245.4px; top: 816px; width: auto; font-size: 13px; text-align: left; padding-left: 0px; padding-right: 0px; transform: scaleX(1.0131); transform-origin: 0px 0px;">balans vertical</div>
<i style="left:344px;top:814px;width:1px;height:19px;background:#c6c6c6"></i>
<div class="t tc" style="left: 358.4px; top: 816px; width: auto; font-size: 13px; text-align: left; padding-left: 0px; padding-right: 0px; transform: scaleX(0.9929); transform-origin: 0px 0px;">res.rek. verticale</div>
<i style="left:469px;top:814px;width:1px;height:19px;background:#c6c6c6"></i>
<div class="t tc" style="left: 484.4px; top: 816px; width: auto; font-size: 13px; text-align: left; padding-left: 0px; padding-right: 0px; transform: scaleX(1.0103); transform-origin: 0px 0px;">res.rek. horizontale</div>
<i style="left:611px;top:814px;width:1px;height:19px;background:#c6c6c6"></i>
<svg style="left:644px;top:815px" width="17" height="17"><circle cx="8.500" cy="8.500" r="7.300" fill="#fff" stroke="#777" stroke-width="1.200"></circle><path d="M8.500 4.500V12.500M4.500 8.500H12.500" stroke="#777" stroke-width="1.400"></path></svg>
<!-- h scrollbar -->
<i style="left:960px;top:819px;width:2px;height:2px;background:#aaa"></i><i style="left:960px;top:823px;width:2px;height:2px;background:#aaa"></i><i style="left:960px;top:827px;width:2px;height:2px;background:#aaa"></i>
<div style="left:992px;top:818px;width:572px;height:13px;background:#ececec"></div>
<div style="left:977px;top:817px;width:15px;height:15px;border:1px solid #ababab;background:#fff"></div>
<svg style="left:981px;top:820px" width="6" height="9"><path d="M5 0.500V8.500L0.500 4.500Z" fill="#666"></path></svg>
<div style="left:991px;top:817px;width:441px;height:15px;border:1px solid #ababab;background:#fff"></div>
<div style="left:1564px;top:817px;width:15px;height:15px;border:1px solid #ababab;background:#fff"></div>
<svg style="left:1569px;top:820px" width="6" height="9"><path d="M0.500 0.500V8.500L5 4.500Z" fill="#666"></path></svg>
<!-- status bar -->
<div style="left:0;top:838px;width:1600px;height:22px;background:#217346"></div>
<div class="t" style="left: 6.4px; top: 841px; color: rgb(255, 255, 255); font-size: 12px; letter-spacing: -0.394px; width: auto; text-align: left; padding-left: 0px; padding-right: 0px; transform: scaleX(0.86); transform-origin: 0px 0px;">READY</div>
<div style="left:1308px;top:838px;width:37px;height:22px;background:#1a5c38"></div>
<svg style="left:1320px;top:842px" width="14" height="14"><rect x="0.500" y="0.500" width="12" height="12" fill="none" stroke="#fff"></rect><path d="M0.500 4.500H12.500M0.500 8.500H12.500M4.500 0.500V12.500M8.500 0.500V12.500" stroke="#fff"></path></svg>
<svg style="left:1358px;top:842px" width="14" height="14"><rect x="0.500" y="0.500" width="12" height="12" fill="none" stroke="#fff"></rect><rect x="3.500" y="3.500" width="6" height="6" fill="none" stroke="#fff"></rect><path d="M5 6.500H8" stroke="#fff"></path></svg>
<svg style="left:1396px;top:842px" width="14" height="14"><rect x="0.500" y="0.500" width="12" height="12" fill="none" stroke="#fff"></rect><rect x="1" y="1" width="5" height="6" fill="#fff"></rect><path d="M8.500 1V8" stroke="#fff"></path></svg>
<i style="left:1426px;top:848px;width:7px;height:2px;background:#fff"></i>
<i style="left:1437px;top:849px;width:100px;height:1px;background:#fff"></i>
<i style="left:1487px;top:843px;width:5px;height:12px;background:#fff"></i>
<i style="left:1541px;top:848px;width:8px;height:2px;background:#fff"></i><i style="left:1544px;top:845px;width:2px;height:8px;background:#fff"></i>
<div class="t" style="left: 1562.9px; top: 841px; color: rgb(255, 255, 255); font-size: 12px; width: auto; text-align: left; padding-left: 0px; padding-right: 0px; transform: scaleX(0.9627); transform-origin: 0px 0px;">115%</div>
<!-- taskbar -->
<div id="task" style="left:0;top:860px;width:1600px;height:40px;background:linear-gradient(#b4c9e2,#a7bedb 45%,#9fb8d7)"></div>
<i style="left:0;top:860px;width:1600px;height:1px;background:#c9d8ea"></i>
<div style="left:1320px;top:861px;width:280px;height:39px;background:linear-gradient(90deg,rgba(132,150,176,0),#8496b0 40px)"></div>
<div style="left:0;top:861px;width:59px;height:39px;background:#8497b1"></div>
<!-- start orb -->
<svg style="left:6px;top:860px" width="42" height="40" viewBox="0 0 42 40">
 <defs><radialGradient id="orb" cx="50%" cy="100%" r="95%"><stop offset="0" stop-color="#19d6f7"></stop><stop offset=".35" stop-color="#0f7dc0"></stop><stop offset=".7" stop-color="#2b6aa8"></stop><stop offset="1" stop-color="#7fa6cf"></stop></radialGradient></defs>
 <circle cx="21" cy="20" r="18.500" fill="#1d4f85"></circle>
 <circle cx="21" cy="20" r="17.300" fill="url(#orb)"></circle>
<g transform="translate(21 20) scale(1.18) translate(-20 -20.300)">
 <path d="M12.800 12.500c2.600-1.300 5.200-1.300 7.600 0.200l-1.700 6.300c-2.500-1.400-5-1.400-7.600-0.200Z" fill="#e8552e"></path>
 <path d="M21.700 13.200c2.500 1.300 5 1.400 7.600 0.200l-1.700 6.300c-2.500 1.100-5 1.100-7.600-0.200Z" fill="#8cc04a"></path>
 <path d="M10.600 20.400c2.600-1.200 5.100-1.200 7.600 0.200l-1.700 6.300c-2.500-1.400-5-1.400-7.600-0.200Z" fill="#3c9be0"></path>
 <path d="M19.500 21.100c2.500 1.300 5 1.400 7.600 0.200l-1.700 6.300c-2.500 1.100-5 1.100-7.600-0.200Z" fill="#fbc52e"></path></g>
</svg>
<!-- task buttons -->
<style>.tbn{top:861px;width:59px;height:39px;border:1px solid #7d93b2;border-bottom:none;border-radius:3px 3px 0 0;background:linear-gradient(rgba(255,255,255,.38),rgba(255,255,255,.16) 50%,rgba(255,255,255,.08));box-shadow:inset 0 0 0 1px rgba(255,255,255,.45)}</style>
<div class="tbn" style="left:60px;border-color:#4a586c;background:linear-gradient(135deg,#dde6f1,#b9cae1 55%,#a9bedb)"></div>
<div class="tbn" style="left:307px"></div><div class="tbn" style="left:369px"></div><div class="tbn" style="left:431px"></div><div class="tbn" style="left:493px"></div><div class="tbn" style="left:555px"></div><div class="tbn" style="left:617px"></div><div class="tbn" style="left:679px"></div>
<!-- explorer -->
<svg style="left:72px;top:864px" width="34" height="34" viewBox="0 0 34 34">
 <path d="M2 6.500Q2 5 3.500 5H11L13 7.500H29.500Q31 7.500 31 9V26H2Z" fill="#e9c86f" stroke="#c9a23e" stroke-width=".8"></path>
 <rect x="4" y="7" width="3" height="2" fill="#3fa54a"></rect><rect x="11" y="8.500" width="3" height="2" fill="#d23b2b"></rect><rect x="20" y="10" width="3" height="2" fill="#3b8fd9"></rect>
 <path d="M2.500 12H31.500V27.500Q31.500 29 30 29H4Q2.500 29 2.500 27.500Z" fill="#f7e39b" stroke="#d1ac4a" stroke-width=".8"></path>
 <path d="M7 31.500V24Q7 22 9 22H25Q27 22 27 24V31.500H22.500V27H11.500V31.500Z" fill="#8fd0f2" stroke="#3d95cf" stroke-width="1"></path>
</svg>
<!-- excel 2010 -->
<svg style="left:134px;top:862px" width="34" height="34" viewBox="0 0 34 34">
 <rect x="1.500" y="2.500" width="27" height="28" rx="1.500" fill="#e8f4e4" stroke="#2e7d32" stroke-width="1.400"></rect>
 <path d="M2.500 3.500H27.500V18Q15 14 2.500 24Z" fill="#7dbb6a" opacity=".55"></path>
 <path d="M6 7H11.500L15 12.500 18.500 7H24L17.800 16 24.500 26H18.800L15 19.800 11.200 26H5.500L12.200 16Z" fill="#2f7d2a"></path>
 <path d="M14 21 30 17 32.500 28 16.500 32Z" fill="#fff" stroke="#9cc39a" stroke-width=".7"></path>
 <path d="M15 24.500 31 20.500M16 28 32 24M20 19.500 22.500 30.500M25.500 18.200 28 29" stroke="#8fbf8a" stroke-width=".8"></path>
</svg>
<!-- word 2010 -->
<svg style="left:196px;top:862px" width="34" height="34" viewBox="0 0 34 34">
 <rect x="1.500" y="2.500" width="27" height="28" rx="1.500" fill="#e6eefb" stroke="#2a5db0" stroke-width="1.400"></rect>
 <path d="M2.500 3.500H27.500V16Q15 13 2.500 22Z" fill="#86aee6" opacity=".55"></path>
 <path d="M3.500 7H8.300L10.300 18.500 13 7H17.300L20 18.500 22 7H26.800L22.800 25H17.800L15.100 14 12.500 25H7.500Z" fill="#1e4fa3"></path>
 <path d="M13 22 30 18 32.500 28.500 15.500 32.500Z" fill="#fff" stroke="#a9bfe3" stroke-width=".7"></path>
 <path d="M15 25 30 21.500M15.800 28 31 24.500" stroke="#a9bfe3" stroke-width=".9"></path>
</svg>
<!-- publisher -->
<svg style="left:258px;top:862px" width="34" height="34" viewBox="0 0 34 34">
 <rect x="1.500" y="2.500" width="27" height="28" rx="1.500" fill="#dff3f0" stroke="#16857a" stroke-width="1.400"></rect>
 <path d="M2.500 3.500H27.500V16Q15 13 2.500 22Z" fill="#76c7bd" opacity=".55"></path>
 <path d="M8 6.500H17Q23 6.500 23 12.500T17 18.500H13V26H8ZM13 10.500V14.500H16Q18 14.500 18 12.500T16 10.500Z" fill="#0f7a70"></path>
 <path d="M16 19.500 29 16 32 28 19 31.500Z" fill="#e8f7f5" stroke="#7cc5bc" stroke-width=".8"></path>
 <path d="M19.500 21.500 27.500 19.300 29.300 26.500 21.300 28.700Z" fill="#9fd8d0"></path>
</svg>
<!-- chrome -->
<svg style="left:320px;top:863px" width="34" height="34" viewBox="0 0 34 34">
 <circle cx="17" cy="17" r="15" fill="#dd4b3e"></circle>
 <path d="M17 17 3.500 10.500A15 15 0 0 0 13 31.500L20 21Z" fill="#1e9e57"></path>
 <path d="M17 17 20.500 31.600A15 15 0 0 0 31 11H17Z" fill="#fdd23e"></path>
 <path d="M17 17 3.800 10A15 15 0 0 1 31 11H17Z" fill="#dd4b3e"></path>
 <circle cx="17" cy="17" r="7" fill="#fff"></circle>
 <circle cx="17" cy="17" r="5.500" fill="#4a8af4"></circle>
</svg>
<!-- skype -->
<svg style="left:382px;top:863px" width="36" height="36" viewBox="0 0 36 36">
 <path d="M16 2C23 0 31 6 29.500 15 33 22 28 30 20 29.500 12 33 3 27 5 18 1 10 8 1 16 2Z" fill="#12a5e8"></path>
 <path d="M22.500 10.500C20 7 11 7.500 11.500 12.500 12 17.500 22 15.500 22.500 20 23 24.500 13 25 11 20.500" fill="none" stroke="#fff" stroke-width="3.400" stroke-linecap="round"></path>
 <circle cx="28" cy="28" r="5.500" fill="#fff" stroke="#86b93a" stroke-width="1.600"></circle>
</svg>
<!-- itunes -->
<svg style="left:445px;top:864px" width="32" height="32" viewBox="0 0 32 32">
 <defs><linearGradient id="itg" x1="0" y1="0" x2="0" y2="1"><stop offset="0" stop-color="#f0527e"></stop><stop offset=".5" stop-color="#c86dd7"></stop><stop offset="1" stop-color="#5fa8f5"></stop></linearGradient></defs>
 <circle cx="16" cy="16" r="14.500" fill="#fff" stroke="url(#itg)" stroke-width="2.400"></circle>
 <path d="M12.500 9.500 22 7.500V20.500A2.800 2.400 0 1 1 20.300 18.300V11.300L14.200 12.600V22.300A2.800 2.400 0 1 1 12.500 20.100Z" fill="url(#itg)"></path>
</svg>
<!-- word 2013 -->
<svg style="left:507px;top:863px" width="34" height="34" viewBox="0 0 34 34">
 <rect x="14" y="5.500" width="17" height="23" fill="#fff" stroke="#2b579a" stroke-width="1.400"></rect>
 <path d="M19 9.500H28.500M19 13H28.500M19 16.500H28.500M19 20H28.500M19 23.500H28.500" stroke="#2b579a" stroke-width="1.600"></path>
 <path d="M1.500 4.500 19.500 1.500V32.500L1.500 29.500Z" fill="#2b579a"></path>
 <path d="M4.500 11.500H6.700L8.200 19.500 9.900 11.500H12L13.700 19.500 15.100 11.500H17.200L14.800 22.500H12.600L10.900 14.800 9.300 22.500H7.100Z" fill="#fff"></path>
</svg>
<!-- acrobat -->
<svg style="left:570px;top:864px" width="30" height="30" viewBox="0 0 30 30">
 <rect x="1.200" y="1.200" width="27.600" height="27.600" fill="#3a1013" stroke="#e8231a" stroke-width="2.400"></rect>
 <path d="M6.500 22.500C9 22 13 16 14.500 9.500 15 7 13.200 6.500 13.500 9 14 13.500 19 19 23 19.500 25 19.700 24.500 17.800 22 18 17 18.500 10 21 7.500 23.500 6.500 24.500 5.500 22.800 6.500 22.500Z" fill="none" stroke="#fff" stroke-width="1.300"></path>
</svg>
<!-- paint-like -->
<svg style="left:632px;top:863px" width="34" height="34" viewBox="0 0 34 34">
 <rect x="2.500" y="2.500" width="24" height="29" fill="#f4f4f4" stroke="#9a9a9a"></rect>
 <rect x="4.500" y="5" width="20" height="20" fill="#2a5fb8"></rect>
 <path d="M4.500 13C9 9 14 16 24.500 10V5H4.500Z" fill="#9fc4ee"></path>
 <path d="M4.500 25V20C10 17 16 23 24.500 19V25Z" fill="#1b3f80"></path>
 <path d="M31.500 9 33 10.500 13 27 11.500 25.500Z" fill="#c0202a"></path>
 <path d="M12 25 14 27 9 31 8 30Z" fill="#777"></path>
</svg>
<!-- excel 2013 -->
<svg style="left:692px;top:863px" width="34" height="34" viewBox="0 0 34 34">
 <rect x="14" y="5.500" width="17" height="23" fill="#fff" stroke="#217346" stroke-width="1.400"></rect>
 <path d="M18.500 9.500H23M25 9.500H29M18.500 13H23M25 13H29M18.500 16.500H23M25 16.500H29M18.500 20H23M25 20H29M18.500 23.500H23M25 23.500H29" stroke="#217346" stroke-width="2"></path>
 <path d="M1.500 4.500 19.500 1.500V32.500L1.500 29.500Z" fill="#217346"></path>
 <path d="M5.500 11.500H8.300L10.500 15.500 12.800 11.500H15.500L11.900 17 15.700 22.500H12.800L10.500 18.500 8.200 22.500H5.300L9.100 17Z" fill="#fff"></path>
</svg>
<!-- tray -->
<div class="t" style="left:1369px;top:870px;color:#fff;font-size:12px">NL</div>
<svg style="left:1390px;top:871px" width="20" height="15" viewBox="0 0 20 15"><rect x="1" y="6" width="16" height="8" rx="1" fill="#c9c9c9" stroke="#777" stroke-width=".8"></rect><path d="M3 8.500H15M3 11.500H15" stroke="#888" stroke-dasharray="1.500 1"></path><path d="M9 6C9 2 13 4 15 1" fill="none" stroke="#bbb" stroke-width="1.100"></path></svg>
<svg style="left:1418px;top:879px" width="11" height="7"><path d="M0.500 6H9.500L5 1Z" fill="#fff"></path></svg>
<svg style="left:1440px;top:873px" width="17" height="17" viewBox="0 0 17 17"><path d="M0.500 2.800 7 1.800V8H0.500ZM8 1.600 16 0.500V8H8ZM0.500 9H7V15.200L0.500 14.200ZM8 9H16V16.500L8 15.400Z" fill="#fff"></path></svg>
<svg style="left:1463px;top:873px" width="19" height="17" viewBox="0 0 19 17"><path d="M1 6H4L8.500 1.500V15.500L4 11H1Z" fill="#fff"></path><path d="M10.500 5.500Q12.500 8.500 10.500 11.500M13 3.500Q16.500 8.500 13 13.500" fill="none" stroke="#fff" stroke-width="1.300"></path></svg>
<svg style="left:1487px;top:872px" width="19" height="18" viewBox="0 0 19 18"><rect x="5.500" y="4.500" width="12" height="9" fill="#8496b0" stroke="#fff" stroke-width="1.400"></rect><path d="M8 16.500H15M11.500 13.500V16.500" stroke="#fff" stroke-width="1.400"></path><path d="M1.500 1V5H5.500V1M3.500 5V13" fill="none" stroke="#fff" stroke-width="1.400"></path></svg>
<div class="t tc" style="left:1518px;top:865px;width:60px;color:#fff;font-size:12px">18:33</div>
<div class="t tc" style="left:1518px;top:882px;width:60px;color:#fff;font-size:12px">5/12/2015</div>
<div style="left:1586px;top:861px;width:14px;height:39px;border:1px solid #5d6d85;background:linear-gradient(90deg,#9aa9be,#6f7f98);box-shadow:inset 0 0 0 1px rgba(255,255,255,.35)"></div>

</div>

</body></html>
